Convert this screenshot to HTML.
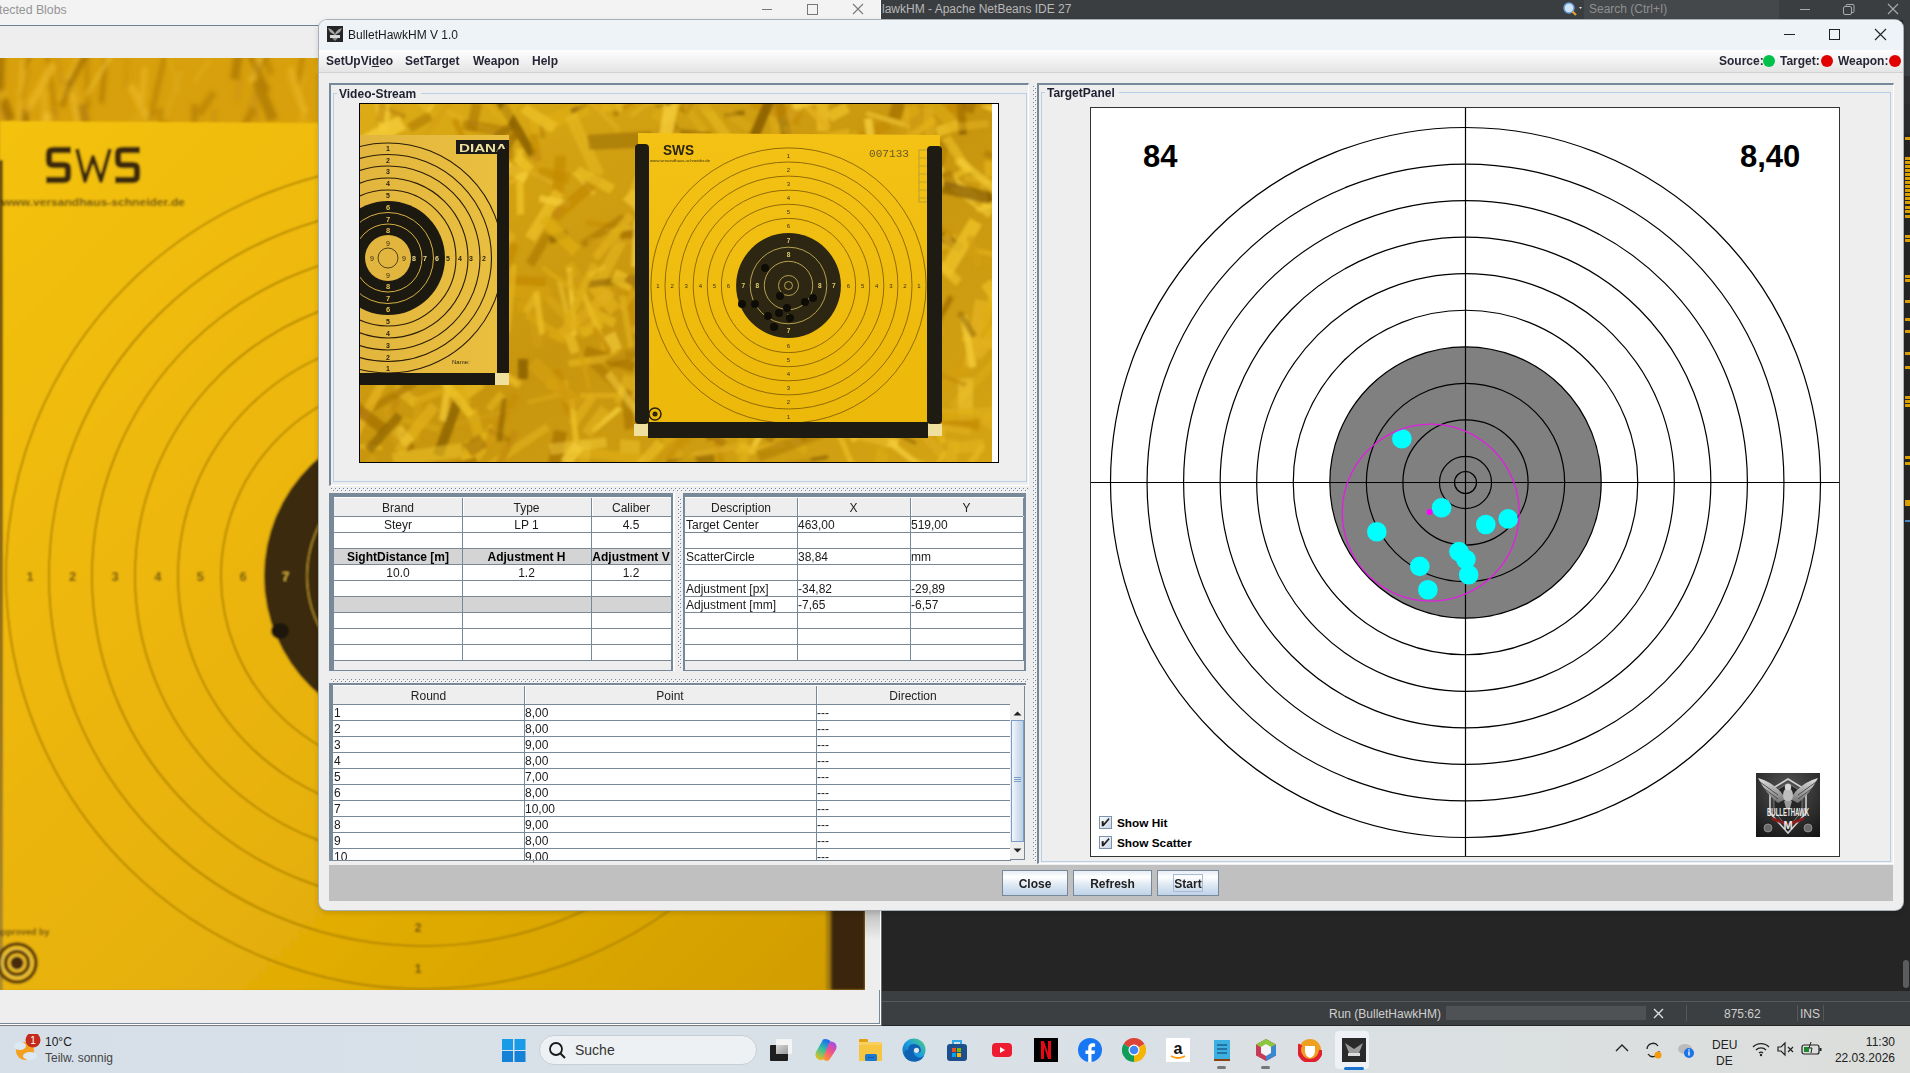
<!DOCTYPE html>
<html><head><meta charset="utf-8"><title>BulletHawkHM</title>
<style>
html,body{margin:0;padding:0;}
body{width:1910px;height:1073px;overflow:hidden;position:relative;background:#232323;font-family:"Liberation Sans", sans-serif;}
.a{position:absolute;}
.t{position:absolute;white-space:nowrap;line-height:1;}
svg{position:absolute;display:block;}
</style></head><body>
<div class="a" style="left:0;top:0;width:881px;height:1025px;background:#eeeeee;overflow:hidden;"><div class="a" style="left:0;top:0;width:881px;height:25px;background:#f3f3f3;"></div><div class="t" style="left:-1px;top:4px;font-size:12.3px;color:#959595;">tected Blobs</div><div class="a" style="left:762px;top:9px;width:10px;height:1px;background:#777;"></div><div class="a" style="left:807px;top:4px;width:9px;height:9px;border:1px solid #777;"></div><svg style="left:852px;top:3px" width="12" height="12"><path d="M1 1L11 11M11 1L1 11" stroke="#777" stroke-width="1.1"/></svg><div class="a" style="left:0;top:25px;width:881px;height:1px;background:#6d7f95;"></div><div class="a" style="left:879px;top:25px;width:1px;height:999px;background:#778899;"></div><div class="a" style="left:880px;top:0;width:1px;height:1025px;background:#ffffff;"></div><div class="a" style="left:0;top:1023px;width:880px;height:1px;background:#778899;"></div><div class="a" style="left:0;top:1024px;width:881px;height:1px;background:#ffffff;"></div><div class="a" style="left:865px;top:58px;width:15px;height:932px;background:linear-gradient(#e6e6e6,#eeeeee);"></div><div class="a" style="left:865px;top:910px;width:15px;height:30px;background:linear-gradient(#bdbdbd,#eeeeee);"></div><svg style="left:0;top:58px" width="865" height="932" viewBox="0 0 865 932"><defs><linearGradient id="lp" x1="0" y1="0" x2="1" y2="1"><stop offset="0" stop-color="#f4c20e"/><stop offset="0.3" stop-color="#eeb80a"/><stop offset="0.55" stop-color="#e8b208"/><stop offset="0.85" stop-color="#d8a404"/><stop offset="1" stop-color="#d09c04"/></linearGradient><linearGradient id="lbar" x1="0" y1="0" x2="0" y2="1"><stop offset="0" stop-color="#2a1608"/><stop offset="0.35" stop-color="#5a4018"/><stop offset="1" stop-color="#a89040"/></linearGradient><linearGradient id="lw" x1="0" y1="0" x2="0" y2="1"><stop offset="0" stop-color="#d8a00c"/><stop offset="1" stop-color="#d49c0a"/></linearGradient></defs><rect x="0" y="0" width="865" height="932" fill="url(#lw)"/><filter id="lbl" x="-5%" y="-5%" width="110%" height="110%"><feGaussianBlur stdDeviation="2.2"/></filter><filter id="lbl2" x="-5%" y="-5%" width="110%" height="110%"><feGaussianBlur stdDeviation="0.9"/></filter><g filter="url(#lbl)"><polygon points="556,26 524,76 531,81 563,30" fill="#dca818" opacity="0.41"/><polygon points="413,46 387,92 390,94 416,48" fill="#b07a08" opacity="0.79"/><polygon points="327,-18 317,13 322,15 332,-16" fill="#f0c030" opacity="0.81"/><polygon points="658,-23 681,33 688,30 665,-25" fill="#f0c030" opacity="0.46"/><polygon points="874,-35 842,14 846,16 878,-33" fill="#f0c030" opacity="0.53"/><polygon points="837,12 854,63 863,60 846,9" fill="#a06c06" opacity="0.49"/><polygon points="848,12 849,33 859,33 857,12" fill="#c89010" opacity="0.43"/><polygon points="253,31 248,50 253,52 258,32" fill="#c89010" opacity="0.56"/><polygon points="255,35 255,64 259,64 259,35" fill="#c89010" opacity="0.84"/><polygon points="-19,29 13,83 21,78 -12,25" fill="#c89010" opacity="0.57"/><polygon points="741,0 732,55 741,57 751,2" fill="#e8b420" opacity="0.74"/><polygon points="815,52 821,89 827,88 822,51" fill="#b07a08" opacity="0.45"/><polygon points="637,33 669,87 677,83 646,28" fill="#e8b420" opacity="0.49"/><polygon points="437,8 444,35 451,33 445,7" fill="#e8b420" opacity="0.54"/><polygon points="259,-4 268,18 275,15 266,-7" fill="#b07a08" opacity="0.47"/><polygon points="20,51 24,97 28,97 24,50" fill="#dca818" opacity="0.55"/><polygon points="211,32 196,54 202,59 217,36" fill="#b07a08" opacity="0.55"/><polygon points="153,53 173,97 181,94 162,49" fill="#b07a08" opacity="0.45"/><polygon points="364,-27 377,34 383,32 370,-28" fill="#dca818" opacity="0.78"/><polygon points="867,6 854,49 860,51 873,8" fill="#c89010" opacity="0.61"/><polygon points="796,-31 792,30 796,30 800,-31" fill="#b07a08" opacity="0.79"/><polygon points="142,9 138,54 144,55 148,9" fill="#e8b420" opacity="0.75"/><polygon points="688,23 670,73 675,75 693,25" fill="#a06c06" opacity="0.70"/><polygon points="741,-22 721,44 731,47 750,-19" fill="#c89010" opacity="0.69"/><polygon points="495,-31 508,15 516,13 503,-33" fill="#b07a08" opacity="0.53"/><polygon points="426,30 435,66 440,65 431,28" fill="#b07a08" opacity="0.56"/><polygon points="754,39 723,84 731,89 762,44" fill="#dca818" opacity="0.46"/><polygon points="873,-11 856,23 861,25 878,-9" fill="#e8b420" opacity="0.72"/><polygon points="641,-25 633,33 641,34 648,-24" fill="#b07a08" opacity="0.54"/><polygon points="489,49 469,76 473,79 492,51" fill="#dca818" opacity="0.60"/><polygon points="572,-18 562,35 565,36 575,-18" fill="#b07a08" opacity="0.84"/><polygon points="134,53 120,75 126,78 140,57" fill="#dca818" opacity="0.42"/><polygon points="402,-3 395,47 400,48 407,-2" fill="#c89010" opacity="0.40"/><polygon points="334,-3 351,34 359,30 342,-7" fill="#c89010" opacity="0.83"/><polygon points="474,-2 472,33 482,33 483,-2" fill="#c89010" opacity="0.83"/><polygon points="724,-5 712,55 717,56 730,-4" fill="#f0c030" opacity="0.47"/><polygon points="319,18 331,45 334,44 322,16" fill="#a06c06" opacity="0.40"/><polygon points="64,16 84,63 91,60 71,13" fill="#dca818" opacity="0.57"/><polygon points="378,-7 359,22 363,25 383,-3" fill="#f0c030" opacity="0.67"/><polygon points="211,51 214,96 219,96 216,51" fill="#c89010" opacity="0.62"/><polygon points="238,17 234,43 240,44 244,18" fill="#c89010" opacity="0.42"/><polygon points="103,1 99,45 104,45 108,2" fill="#b07a08" opacity="0.75"/><polygon points="208,-0 192,23 196,26 212,3" fill="#dca818" opacity="0.85"/><polygon points="463,35 432,91 435,92 466,36" fill="#f0c030" opacity="0.54"/><polygon points="461,1 459,36 465,36 467,1" fill="#c89010" opacity="0.71"/><polygon points="712,-9 711,11 718,12 720,-8" fill="#e8b420" opacity="0.80"/><polygon points="469,-38 472,21 479,20 476,-38" fill="#a06c06" opacity="0.83"/><polygon points="563,32 563,94 571,94 571,32" fill="#a06c06" opacity="0.49"/><polygon points="250,48 240,69 247,73 257,52" fill="#b07a08" opacity="0.66"/><polygon points="557,15 570,48 577,45 564,12" fill="#b07a08" opacity="0.84"/><polygon points="452,8 475,49 482,45 459,4" fill="#c89010" opacity="0.77"/><polygon points="695,35 689,55 698,58 704,38" fill="#b07a08" opacity="0.72"/><polygon points="23,45 16,76 26,78 32,47" fill="#a06c06" opacity="0.80"/><polygon points="870,31 885,70 889,69 874,30" fill="#f0c030" opacity="0.43"/><polygon points="179,11 162,62 167,63 184,13" fill="#dca818" opacity="0.66"/><polygon points="649,51 650,78 655,78 654,51" fill="#dca818" opacity="0.62"/><polygon points="285,17 310,77 315,75 289,15" fill="#dca818" opacity="0.68"/><polygon points="440,43 431,90 436,91 444,44" fill="#dca818" opacity="0.51"/><polygon points="743,-19 716,44 724,48 751,-16" fill="#b07a08" opacity="0.73"/><polygon points="127,29 151,76 158,72 134,25" fill="#e8b420" opacity="0.79"/><polygon points="433,9 434,48 444,48 443,9" fill="#e8b420" opacity="0.76"/><polygon points="-2,43 7,64 15,60 7,39" fill="#a06c06" opacity="0.76"/><polygon points="657,-36 656,30 660,30 661,-36" fill="#a06c06" opacity="0.68"/><polygon points="301,-9 295,28 300,29 306,-8" fill="#b07a08" opacity="0.57"/><polygon points="633,2 626,37 636,38 642,4" fill="#c89010" opacity="0.63"/><polygon points="512,11 517,67 521,67 515,10" fill="#e8b420" opacity="0.48"/><polygon points="162,-2 147,64 152,65 167,-0" fill="#b07a08" opacity="0.61"/><polygon points="783,22 784,63 787,63 787,22" fill="#f0c030" opacity="0.69"/><polygon points="41,32 41,96 48,96 48,32" fill="#e8b420" opacity="0.52"/><polygon points="125,-1 124,30 128,30 128,-1" fill="#c89010" opacity="0.54"/><polygon points="41,-28 22,10 26,12 44,-27" fill="#a06c06" opacity="0.55"/><polygon points="370,-18 405,42 412,38 377,-22" fill="#dca818" opacity="0.50"/><polygon points="44,-10 53,58 58,58 49,-10" fill="#b07a08" opacity="0.56"/><polygon points="46,53 31,94 35,96 50,55" fill="#f0c030" opacity="0.82"/><polygon points="545,-2 581,57 584,55 548,-3" fill="#a06c06" opacity="0.58"/><polygon points="20,2 16,71 22,71 25,2" fill="#e8b420" opacity="0.72"/><polygon points="191,46 191,71 198,71 198,46" fill="#a06c06" opacity="0.42"/><polygon points="336,-21 338,12 343,11 341,-21" fill="#e8b420" opacity="0.79"/><polygon points="843,-21 832,33 837,34 847,-20" fill="#f0c030" opacity="0.44"/><polygon points="273,-23 249,18 255,21 279,-19" fill="#a06c06" opacity="0.50"/><polygon points="-5,14 -10,58 -4,58 1,14" fill="#a06c06" opacity="0.46"/><polygon points="-0,28 -26,76 -17,81 9,33" fill="#dca818" opacity="0.45"/><polygon points="271,-30 248,23 253,25 276,-28" fill="#f0c030" opacity="0.64"/><polygon points="420,22 387,72 393,76 427,26" fill="#c89010" opacity="0.43"/><polygon points="608,-20 615,9 620,8 613,-21" fill="#e8b420" opacity="0.43"/><polygon points="658,-1 690,48 694,46 663,-4" fill="#f0c030" opacity="0.66"/><polygon points="391,35 362,79 369,84 398,39" fill="#a06c06" opacity="0.59"/><polygon points="69,35 78,83 83,82 75,34" fill="#f0c030" opacity="0.52"/><polygon points="592,2 585,24 591,26 599,5" fill="#e8b420" opacity="0.45"/><polygon points="847,41 858,82 867,79 857,39" fill="#e8b420" opacity="0.50"/><polygon points="356,7 375,38 381,34 362,3" fill="#f0c030" opacity="0.73"/><polygon points="67,21 59,48 65,50 73,22" fill="#b07a08" opacity="0.76"/><polygon points="83,-16 85,50 91,50 89,-16" fill="#b07a08" opacity="0.42"/><polygon points="583,-18 583,25 586,26 586,-18" fill="#f0c030" opacity="0.77"/><polygon points="339,-33 374,26 380,22 345,-37" fill="#b07a08" opacity="0.72"/><polygon points="304,15 292,42 297,44 309,17" fill="#dca818" opacity="0.56"/><polygon points="650,-6 660,30 670,27 659,-9" fill="#e8b420" opacity="0.68"/><polygon points="342,-29 341,33 344,33 345,-29" fill="#f0c030" opacity="0.58"/><polygon points="671,-18 646,43 653,46 678,-15" fill="#b07a08" opacity="0.71"/><polygon points="756,13 763,73 766,73 759,13" fill="#dca818" opacity="0.67"/><polygon points="541,48 536,68 543,70 548,50" fill="#dca818" opacity="0.57"/><polygon points="419,31 396,64 403,69 426,36" fill="#a06c06" opacity="0.65"/><polygon points="45,-15 23,19 25,20 48,-14" fill="#dca818" opacity="0.49"/><polygon points="239,-37 230,21 239,22 248,-36" fill="#a06c06" opacity="0.59"/><polygon points="846,-40 865,24 868,23 849,-41" fill="#e8b420" opacity="0.70"/><polygon points="854,40 831,89 838,93 861,43" fill="#dca818" opacity="0.65"/><polygon points="411,-14 415,11 423,10 419,-16" fill="#b07a08" opacity="0.58"/><polygon points="-19,8 -25,36 -16,38 -10,10" fill="#a06c06" opacity="0.68"/><polygon points="328,-28 323,26 331,27 336,-27" fill="#c89010" opacity="0.51"/><polygon points="80,-13 58,42 61,43 83,-12" fill="#f0c030" opacity="0.43"/><polygon points="353,-21 347,32 354,32 360,-20" fill="#a06c06" opacity="0.80"/><polygon points="636,5 633,46 642,46 645,5" fill="#c89010" opacity="0.59"/><polygon points="53,48 56,84 60,84 57,47" fill="#c89010" opacity="0.65"/><polygon points="524,-10 520,20 528,21 532,-8" fill="#a06c06" opacity="0.55"/><polygon points="48,57 47,84 50,84 51,58" fill="#f0c030" opacity="0.78"/><polygon points="564,52 555,83 564,85 572,55" fill="#b07a08" opacity="0.78"/><polygon points="-23,35 -19,60 -14,59 -18,34" fill="#e8b420" opacity="0.66"/><polygon points="365,-8 385,46 394,43 374,-12" fill="#dca818" opacity="0.83"/><polygon points="539,61 550,84 553,83 542,60" fill="#f0c030" opacity="0.55"/><polygon points="146,32 122,98 127,99 150,34" fill="#dca818" opacity="0.61"/><polygon points="-30,43 -3,105 0,104 -27,42" fill="#b07a08" opacity="0.83"/><polygon points="841,-32 824,23 829,25 846,-31" fill="#e8b420" opacity="0.76"/><polygon points="880,39 885,69 888,68 884,39" fill="#b07a08" opacity="0.69"/><polygon points="668,-15 670,11 679,10 677,-16" fill="#e8b420" opacity="0.63"/><polygon points="28,10 20,41 24,42 31,11" fill="#c89010" opacity="0.84"/><polygon points="483,12 471,38 479,42 491,16" fill="#f0c030" opacity="0.44"/><polygon points="303,48 296,67 301,69 308,50" fill="#e8b420" opacity="0.41"/><polygon points="470,45 499,102 508,97 479,41" fill="#f0c030" opacity="0.84"/><polygon points="373,19 379,43 388,41 382,17" fill="#a06c06" opacity="0.61"/><polygon points="-3,-26 -5,33 4,33 6,-26" fill="#a06c06" opacity="0.69"/><polygon points="556,-18 549,2 555,4 562,-16" fill="#b07a08" opacity="0.81"/><polygon points="335,49 307,99 311,101 338,51" fill="#f0c030" opacity="0.59"/><polygon points="856,59 858,90 863,90 861,59" fill="#b07a08" opacity="0.56"/><polygon points="-10,16 -29,71 -26,72 -6,17" fill="#a06c06" opacity="0.57"/><polygon points="781,55 796,80 804,76 788,50" fill="#c89010" opacity="0.67"/><polygon points="119,-19 85,37 87,39 122,-17" fill="#f0c030" opacity="0.77"/><polygon points="51,-24 60,28 64,27 55,-25" fill="#c89010" opacity="0.63"/><polygon points="854,40 864,62 871,59 861,37" fill="#c89010" opacity="0.54"/><polygon points="806,16 786,53 795,58 814,20" fill="#f0c030" opacity="0.52"/><polygon points="470,39 469,65 477,66 478,39" fill="#e8b420" opacity="0.41"/><polygon points="161,-16 177,37 182,36 166,-18" fill="#dca818" opacity="0.51"/><polygon points="606,36 601,94 607,95 612,36" fill="#e8b420" opacity="0.69"/><polygon points="819,-2 806,42 815,45 828,1" fill="#b07a08" opacity="0.84"/><polygon points="235,-24 266,35 271,32 241,-27" fill="#a06c06" opacity="0.50"/><polygon points="547,-24 529,18 534,20 552,-21" fill="#b07a08" opacity="0.46"/><polygon points="287,10 302,56 308,54 293,8" fill="#e8b420" opacity="0.73"/><polygon points="78,47 85,85 93,84 87,45" fill="#b07a08" opacity="0.75"/><polygon points="653,-18 642,42 648,43 659,-17" fill="#a06c06" opacity="0.76"/><polygon points="628,11 595,66 603,70 635,15" fill="#dca818" opacity="0.46"/><polygon points="13,33 38,74 41,72 16,32" fill="#dca818" opacity="0.62"/><polygon points="755,-27 775,18 783,14 762,-31" fill="#dca818" opacity="0.60"/><polygon points="506,8 491,61 499,63 514,10" fill="#dca818" opacity="0.44"/><polygon points="50,4 24,50 31,54 57,8" fill="#e8b420" opacity="0.83"/><polygon points="588,-6 596,34 602,32 594,-7" fill="#c89010" opacity="0.40"/><polygon points="664,1 665,66 669,66 668,1" fill="#f0c030" opacity="0.82"/><polygon points="252,24 268,64 278,60 261,20" fill="#a06c06" opacity="0.59"/><polygon points="534,33 545,60 551,57 540,31" fill="#a06c06" opacity="0.63"/><polygon points="822,9 824,30 830,29 829,9" fill="#dca818" opacity="0.64"/><polygon points="789,11 792,64 801,63 797,10" fill="#c89010" opacity="0.53"/><polygon points="84,-6 66,28 71,30 89,-3" fill="#a06c06" opacity="0.72"/></g><g filter="url(#lbl2)"><polygon points="0,63 865,68 865,932 0,932" fill="url(#lp)"/><ellipse cx="424" cy="518" rx="418" ry="413" fill="none" stroke="#a47a00" stroke-width="1.5"/><ellipse cx="424" cy="518" rx="375" ry="370" fill="none" stroke="#a47a00" stroke-width="1.5"/><ellipse cx="424" cy="518" rx="332" ry="327" fill="none" stroke="#a47a00" stroke-width="1.5"/><ellipse cx="424" cy="518" rx="289" ry="284" fill="none" stroke="#a47a00" stroke-width="1.5"/><ellipse cx="424" cy="518" rx="246" ry="241" fill="none" stroke="#a47a00" stroke-width="1.5"/><ellipse cx="424" cy="518" rx="203" ry="198" fill="none" stroke="#a47a00" stroke-width="1.5"/><ellipse cx="424" cy="518" rx="160" ry="157" fill="#3b2c0c"/><ellipse cx="424" cy="518" rx="117" ry="115" fill="none" stroke="#c9a030" stroke-width="1.2"/><text x="30.0" y="523" font-family="Liberation Sans" font-size="13" font-weight="bold" fill="#6e5408" text-anchor="middle">1</text><text x="72.6" y="523" font-family="Liberation Sans" font-size="13" font-weight="bold" fill="#6e5408" text-anchor="middle">2</text><text x="115.2" y="523" font-family="Liberation Sans" font-size="13" font-weight="bold" fill="#6e5408" text-anchor="middle">3</text><text x="157.8" y="523" font-family="Liberation Sans" font-size="13" font-weight="bold" fill="#6e5408" text-anchor="middle">4</text><text x="200.4" y="523" font-family="Liberation Sans" font-size="13" font-weight="bold" fill="#6e5408" text-anchor="middle">5</text><text x="243.0" y="523" font-family="Liberation Sans" font-size="13" font-weight="bold" fill="#6e5408" text-anchor="middle">6</text><text x="285.6" y="523" font-family="Liberation Sans" font-size="13" font-weight="bold" fill="#d8b040" text-anchor="middle">7</text><text x="418" y="874" font-family="Liberation Sans" font-size="13" font-weight="bold" fill="#6e5408" text-anchor="middle">2</text><text x="418" y="915" font-family="Liberation Sans" font-size="13" font-weight="bold" fill="#6e5408" text-anchor="middle">1</text><ellipse cx="280" cy="573" rx="9" ry="8" fill="#1e1608"/><path d="M71 150 L53 150 Q49 150 49 154 L49 161 Q49 165 53 165 L64 165 Q68 165 68 169 L68 176 Q68 180 64 180 L46 180" transform="translate(0,-58)" fill="none" stroke="#3e2a0c" stroke-width="6.5" stroke-linejoin="round"/><path d="M71 150 L53 150 Q49 150 49 154 L49 161 Q49 165 53 165 L64 165 Q68 165 68 169 L68 176 Q68 180 64 180 L46 180" transform="translate(69,-58)" fill="none" stroke="#3e2a0c" stroke-width="6.5" stroke-linejoin="round"/><path d="M77 149 L85 181 L93 157 L101 181 L110 149" transform="translate(0,-58)" fill="none" stroke="#3e2a0c" stroke-width="4" stroke-linejoin="round"/><text x="2" y="148" font-family="Liberation Sans" font-size="11" font-weight="bold" fill="#6a5214" textLength="183" lengthAdjust="spacingAndGlyphs">www.versandhaus-schneider.de</text><rect x="0" y="102" width="2.5" height="932" fill="url(#lbar)"/><text x="-4" y="877" font-family="Liberation Sans" font-size="9" font-weight="bold" fill="#6a5214">approved by</text><circle cx="17" cy="905" r="19" fill="none" stroke="#5a3a08" stroke-width="3.5"/><circle cx="17" cy="905" r="14.5" fill="none" stroke="#e8c040" stroke-width="2.5"/><circle cx="17" cy="905" r="11.5" fill="none" stroke="#5a3a08" stroke-width="3.5"/><circle cx="17" cy="905" r="8" fill="#e8c040"/><circle cx="17" cy="905" r="6.5" fill="#4a2a08"/><rect x="830" y="802" width="35" height="130" fill="#3a2808"/><rect x="826" y="802" width="6" height="130" fill="#8a6a10" opacity="0.6"/></g></svg></div><div class="a" style="left:0;top:1025px;width:882px;height:1px;background:#7a7a7a;"></div><div class="a" style="left:881px;top:0;width:1029px;height:1026px;background:#252526;overflow:hidden;"><div class="a" style="left:0;top:0;width:1029px;height:20px;background:#3b3e41;"></div><div class="t" style="left:1px;top:3px;font-size:12px;color:#b8b8b8;">lawkHM - Apache NetBeans IDE 27</div><svg style="left:680px;top:1px" width="24" height="18"><circle cx="8" cy="7" r="5" fill="#cfe3f7" stroke="#6aa0d8" stroke-width="1.4"/><path d="M11.5 10.5L15 14" stroke="#e0a030" stroke-width="2.2"/><path d="M18 6l3 0l-1.5 2z" fill="#ddd"/></svg><div class="a" style="left:703px;top:0;width:195px;height:19px;background:#45484b;"></div><div class="t" style="left:708px;top:3px;font-size:12px;color:#8f8f8f;">Search (Ctrl+I)</div><div class="a" style="left:919px;top:9px;width:10px;height:1px;background:#aaa;"></div><svg style="left:961px;top:3px" width="14" height="14"><rect x="1.5" y="3.5" width="8" height="8" rx="1.5" fill="none" stroke="#aaa"/><path d="M4 3.5V2.5a1 1 0 0 1 1-1h6a1 1 0 0 1 1 1v6a1 1 0 0 1-1 1h-1.5" fill="none" stroke="#aaa"/></svg><svg style="left:1006px;top:3px" width="12" height="12"><path d="M1 1L11 11M11 1L1 11" stroke="#aaa" stroke-width="1.1"/></svg><div class="a" style="left:1022px;top:20px;width:7px;height:56px;background:#3c3f41;"></div><div class="a" style="left:1022px;top:76px;width:7px;height:28px;background:#2f3133;"></div><div class="a" style="left:1022px;top:104px;width:7px;height:30px;background:#2b2d2f;"></div><div class="a" style="left:1024px;top:137px;width:6px;height:3px;background:#e0a000;"></div><div class="a" style="left:1024px;top:157px;width:6px;height:3px;background:#e0a000;"></div><div class="a" style="left:1024px;top:161px;width:6px;height:3px;background:#e0a000;"></div><div class="a" style="left:1024px;top:165px;width:6px;height:3px;background:#e0a000;"></div><div class="a" style="left:1024px;top:169px;width:6px;height:3px;background:#e0a000;"></div><div class="a" style="left:1024px;top:173px;width:6px;height:3px;background:#e0a000;"></div><div class="a" style="left:1024px;top:177px;width:6px;height:3px;background:#e0a000;"></div><div class="a" style="left:1024px;top:181px;width:6px;height:3px;background:#e0a000;"></div><div class="a" style="left:1024px;top:185px;width:6px;height:3px;background:#e0a000;"></div><div class="a" style="left:1024px;top:189px;width:6px;height:3px;background:#e0a000;"></div><div class="a" style="left:1024px;top:193px;width:6px;height:3px;background:#e0a000;"></div><div class="a" style="left:1024px;top:197px;width:6px;height:3px;background:#e0a000;"></div><div class="a" style="left:1024px;top:201px;width:6px;height:3px;background:#e0a000;"></div><div class="a" style="left:1024px;top:206px;width:6px;height:3px;background:#e0a000;"></div><div class="a" style="left:1024px;top:210px;width:6px;height:3px;background:#e0a000;"></div><div class="a" style="left:1024px;top:215px;width:6px;height:3px;background:#e0a000;"></div><div class="a" style="left:1024px;top:235px;width:6px;height:3px;background:#e0a000;"></div><div class="a" style="left:1024px;top:239px;width:6px;height:3px;background:#e0a000;"></div><div class="a" style="left:1024px;top:275px;width:6px;height:3px;background:#e0a000;"></div><div class="a" style="left:1024px;top:279px;width:6px;height:3px;background:#e0a000;"></div><div class="a" style="left:1024px;top:300px;width:6px;height:3px;background:#e0a000;"></div><div class="a" style="left:1024px;top:318px;width:6px;height:3px;background:#e0a000;"></div><div class="a" style="left:1024px;top:330px;width:6px;height:3px;background:#e0a000;"></div><div class="a" style="left:1024px;top:352px;width:6px;height:3px;background:#e0a000;"></div><div class="a" style="left:1024px;top:366px;width:6px;height:3px;background:#e0a000;"></div><div class="a" style="left:1024px;top:396px;width:6px;height:3px;background:#e0a000;"></div><div class="a" style="left:1024px;top:400px;width:6px;height:3px;background:#e0a000;"></div><div class="a" style="left:1024px;top:404px;width:6px;height:3px;background:#e0a000;"></div><div class="a" style="left:1024px;top:456px;width:6px;height:3px;background:#e0a000;"></div><div class="a" style="left:1024px;top:462px;width:6px;height:3px;background:#e0a000;"></div><div class="a" style="left:1024px;top:500px;width:6px;height:3px;background:#e0a000;"></div><div class="a" style="left:1024px;top:503px;width:6px;height:3px;background:#e0a000;"></div><div class="a" style="left:1024px;top:520px;width:6px;height:2px;background:#4a88c8;"></div><div class="a" style="left:1022px;top:960px;width:6px;height:28px;background:#5a5d60;border-radius:3px;"></div><div class="a" style="left:0;top:991px;width:1029px;height:34px;background:#3c3f41;"></div><div class="a" style="left:0;top:1001px;width:1029px;height:1px;background:#56595c;"></div><div class="t" style="left:448px;top:1008px;font-size:12px;color:#cfcfcf;">Run (BulletHawkHM)</div><div class="a" style="left:565px;top:1006px;width:200px;height:14px;background:#4e5254;"></div><svg style="left:772px;top:1008px" width="11" height="11"><path d="M1 1L10 10M10 1L1 10" stroke="#ddd" stroke-width="1.4"/></svg><div class="a" style="left:805px;top:1005px;width:1px;height:16px;background:#55585b;"></div><div class="t" style="left:843px;top:1008px;font-size:12px;color:#cfcfcf;">875:62</div><div class="a" style="left:916px;top:1005px;width:1px;height:16px;background:#55585b;"></div><div class="t" style="left:919px;top:1008px;font-size:12px;color:#cfcfcf;">INS</div><div class="a" style="left:942px;top:1005px;width:1px;height:16px;background:#55585b;"></div><div class="a" style="left:0;top:20px;width:1px;height:1006px;background:#6a6a6a;"></div></div><div class="a" style="left:319px;top:20px;width:1584px;height:890px;background:#eeeeee;border-radius:8px;overflow:hidden;box-shadow:0 0 0 1px #a9b0b6, 0 2px 6px rgba(0,0,0,0.18);"><div class="a" style="left:0px;top:0px;width:1584px;height:30px;background:#edf3f6;"></div><svg style="left:8px;top:6px" width="16" height="16"><rect width="16" height="16" fill="#262626"/><path d="M1 2Q5 3 7 6L8 8L9 6Q11 3 15 2L13 6Q10 8 8 9Q6 8 3 6Z" fill="#a8a8a8"/><rect x="3" y="9" width="10" height="3" fill="#d8d8d8"/><path d="M5 12L8 15L11 12Z" fill="#888"/></svg><div class="t" style="left:29px;top:9px;font-size:12px;color:#1a1a1a;">BulletHawkHM V 1.0</div><div class="a" style="left:1465px;top:14px;width:11px;height:1px;background:#222;"></div><div class="a" style="left:1510px;top:9px;width:10px;height:10px;border:1px solid #222;box-sizing:border-box;width:11px;height:11px;"></div><svg style="left:1555px;top:8px" width="13" height="13"><path d="M1 1L12 12M12 1L1 12" stroke="#222" stroke-width="1.1"/></svg><div class="a" style="left:0px;top:30px;width:1584px;height:22px;background:linear-gradient(#ffffff,#f4f4f4 40%,#e4e4e4);"></div><div class="a" style="left:0px;top:52px;width:1584px;height:1px;background:#d2d2d2;"></div><div class="t" style="left:7px;top:35px;font-size:12px;font-weight:bold;color:#262636;">SetUpVi<span style="text-decoration:underline">d</span>eo</div><div class="t" style="left:86px;top:35px;font-size:12px;font-weight:bold;color:#262636;">SetTarget</div><div class="t" style="left:154px;top:35px;font-size:12px;font-weight:bold;color:#262636;">Weapon</div><div class="t" style="left:213px;top:35px;font-size:12px;font-weight:bold;color:#262636;">Help</div><div class="t" style="left:1400px;top:35px;font-size:12px;font-weight:bold;color:#262636;">Source:</div><div class="a" style="left:1444px;top:35px;width:12px;height:12px;border-radius:50%;background:#00c24a;"></div><div class="t" style="left:1461px;top:35px;font-size:12px;font-weight:bold;color:#262636;">Target:</div><div class="a" style="left:1502px;top:35px;width:12px;height:12px;border-radius:50%;background:#e00000;"></div><div class="t" style="left:1519px;top:35px;font-size:12px;font-weight:bold;color:#262636;">Weapon:</div><div class="a" style="left:1570px;top:35px;width:12px;height:12px;border-radius:50%;background:#e00000;"></div><div class="a" style="left:10px;top:63px;width:700px;height:403px;border-top:2px solid #778899;border-left:2px solid #778899;border-right:1px solid #fff;border-bottom:1px solid #fff;box-sizing:border-box;"></div><div class="a" style="left:14px;top:73px;width:694px;height:389px;border:1px solid #b8cfe5;box-sizing:border-box;"></div><div class="a" style="left:18px;top:66px;width:84px;height:12px;background:#eeeeee;"></div><div class="t" style="left:20px;top:68px;font-size:12px;font-weight:bold;color:#1e2030;">Video-Stream</div><div class="a" style="left:40px;top:83px;width:640px;height:360px;background:#000;"></div><svg style="left:41px;top:84px" width="638" height="358" viewBox="0 0 638 358"><defs><linearGradient id="vw" x1="0" y1="0" x2="1" y2="1"><stop offset="0" stop-color="#dcac16"/><stop offset="0.5" stop-color="#c8960e"/><stop offset="1" stop-color="#d4a414"/></linearGradient><linearGradient id="dp" x1="0" x2="1"><stop offset="0" stop-color="#e2b63e"/><stop offset="1" stop-color="#eac040"/></linearGradient><linearGradient id="sp" x1="0" y1="0" x2="0" y2="1"><stop offset="0" stop-color="#f3c214"/><stop offset="1" stop-color="#ecb80a"/></linearGradient></defs><filter id="vbl" x="-5%" y="-5%" width="110%" height="110%"><feGaussianBlur stdDeviation="1.4"/></filter><rect width="638" height="358" fill="url(#vw)"/><g filter="url(#vbl)"><polygon points="279,171 286,236 295,235 288,170" fill="#f4cc38" opacity="0.81"/><polygon points="298,212 302,237 307,236 303,211" fill="#e4b41a" opacity="0.72"/><polygon points="257,133 231,182 241,187 267,138" fill="#ecc026" opacity="0.48"/><polygon points="104,68 105,85 114,84 113,67" fill="#8a6004" opacity="0.56"/><polygon points="180,-29 171,-11 178,-8 188,-25" fill="#ecc026" opacity="0.77"/><polygon points="177,74 208,80 210,69 180,63" fill="#c48a08" opacity="0.62"/><polygon points="620,318 632,327 640,317 627,308" fill="#e2b01c" opacity="0.64"/><polygon points="348,38 375,83 380,80 353,35" fill="#e2b01c" opacity="0.79"/><polygon points="49,82 69,84 71,74 51,72" fill="#8a6004" opacity="0.53"/><polygon points="314,345 329,401 336,399 321,344" fill="#deae16" opacity="0.45"/><polygon points="590,366 542,367 542,370 590,369" fill="#ecc026" opacity="0.47"/><polygon points="76,146 72,161 82,165 87,150" fill="#ecc026" opacity="0.49"/><polygon points="362,56 380,101 388,97 371,52" fill="#d4a012" opacity="0.82"/><polygon points="56,115 83,156 88,152 61,111" fill="#deae16" opacity="0.52"/><polygon points="393,177 413,226 420,224 400,175" fill="#e4b41a" opacity="0.50"/><polygon points="12,350 -5,372 0,376 18,354" fill="#d4a012" opacity="0.58"/><polygon points="89,264 102,277 109,269 96,256" fill="#ecc026" opacity="0.58"/><polygon points="594,58 605,69 610,64 599,53" fill="#f4cc38" opacity="0.58"/><polygon points="329,367 348,375 351,368 332,360" fill="#8a6004" opacity="0.71"/><polygon points="81,-14 66,-11 69,1 85,-2" fill="#e4b41a" opacity="0.72"/><polygon points="15,2 44,15 46,11 17,-2" fill="#a87404" opacity="0.78"/><polygon points="608,252 566,285 573,295 615,262" fill="#d4a012" opacity="0.86"/><polygon points="595,129 542,154 546,163 599,138" fill="#e2b01c" opacity="0.62"/><polygon points="-22,8 -3,15 -1,9 -20,2" fill="#a87404" opacity="0.62"/><polygon points="494,200 460,218 462,223 497,204" fill="#e4b41a" opacity="0.59"/><polygon points="6,-17 69,6 73,-5 10,-29" fill="#d4a012" opacity="0.57"/><polygon points="-35,87 7,118 10,113 -31,81" fill="#d4a012" opacity="0.67"/><polygon points="144,125 132,151 143,157 156,131" fill="#deae16" opacity="0.85"/><polygon points="224,209 253,224 257,215 228,201" fill="#e4b41a" opacity="0.77"/><polygon points="619,79 623,103 629,102 625,78" fill="#e2b01c" opacity="0.62"/><polygon points="354,230 307,257 311,265 358,238" fill="#e4b41a" opacity="0.58"/><polygon points="380,239 394,266 403,261 390,234" fill="#f4cc38" opacity="0.63"/><polygon points="116,272 92,290 101,300 125,283" fill="#ecc026" opacity="0.65"/><polygon points="436,231 377,241 378,250 437,241" fill="#d4a012" opacity="0.57"/><polygon points="442,281 486,287 487,280 443,274" fill="#8a6004" opacity="0.76"/><polygon points="318,200 335,254 348,249 331,195" fill="#ecc026" opacity="0.63"/><polygon points="565,128 599,149 605,141 571,120" fill="#8a6004" opacity="0.71"/><polygon points="567,264 576,331 585,330 576,263" fill="#ecc026" opacity="0.55"/><polygon points="588,335 581,404 592,405 599,337" fill="#e4b41a" opacity="0.61"/><polygon points="50,137 17,168 22,174 55,142" fill="#ecc026" opacity="0.64"/><polygon points="28,181 -23,194 -21,203 31,191" fill="#8a6004" opacity="0.83"/><polygon points="468,351 426,358 427,362 468,355" fill="#8a6004" opacity="0.70"/><polygon points="538,191 538,215 550,216 549,192" fill="#e2b01c" opacity="0.88"/><polygon points="554,220 583,233 586,225 557,212" fill="#d4a012" opacity="0.54"/><polygon points="319,185 367,189 368,176 320,172" fill="#e2b01c" opacity="0.69"/><polygon points="639,29 656,39 663,28 645,18" fill="#e2b01c" opacity="0.57"/><polygon points="314,14 281,36 288,47 320,25" fill="#a87404" opacity="0.50"/><polygon points="268,-24 252,1 261,8 277,-18" fill="#f4cc38" opacity="0.55"/><polygon points="450,91 437,123 442,125 455,93" fill="#ecc026" opacity="0.83"/><polygon points="427,254 377,274 379,278 428,258" fill="#8a6004" opacity="0.73"/><polygon points="326,312 360,340 364,335 330,307" fill="#f4cc38" opacity="0.55"/><polygon points="462,277 496,332 503,328 468,273" fill="#deae16" opacity="0.80"/><polygon points="82,8 140,33 142,29 84,4" fill="#e2b01c" opacity="0.82"/><polygon points="257,286 266,306 274,303 266,283" fill="#deae16" opacity="0.71"/><polygon points="229,290 209,318 216,324 236,295" fill="#deae16" opacity="0.81"/><polygon points="311,-39 291,14 303,19 322,-35" fill="#deae16" opacity="0.53"/><polygon points="152,304 84,321 85,325 152,308" fill="#d4a012" opacity="0.48"/><polygon points="34,120 52,154 57,151 39,117" fill="#e4b41a" opacity="0.83"/><polygon points="92,135 109,188 114,186 97,133" fill="#8a6004" opacity="0.81"/><polygon points="225,-4 168,18 174,31 231,10" fill="#deae16" opacity="0.68"/><polygon points="659,291 630,298 634,310 662,303" fill="#e2b01c" opacity="0.51"/><polygon points="197,178 205,212 210,211 202,177" fill="#f4cc38" opacity="0.48"/><polygon points="204,162 210,176 220,171 213,157" fill="#deae16" opacity="0.57"/><polygon points="625,87 634,112 639,111 630,86" fill="#8a6004" opacity="0.90"/><polygon points="444,255 387,259 387,263 444,259" fill="#deae16" opacity="0.57"/><polygon points="245,-11 255,13 259,11 249,-13" fill="#a87404" opacity="0.70"/><polygon points="347,359 301,359 301,370 348,371" fill="#ecc026" opacity="0.70"/><polygon points="450,353 414,359 416,368 452,362" fill="#d4a012" opacity="0.69"/><polygon points="368,137 395,169 401,165 374,132" fill="#8a6004" opacity="0.58"/><polygon points="431,189 413,214 417,217 435,193" fill="#deae16" opacity="0.71"/><polygon points="383,142 435,150 436,144 384,135" fill="#a87404" opacity="0.48"/><polygon points="614,146 573,150 574,156 615,152" fill="#d4a012" opacity="0.51"/><polygon points="604,77 657,85 658,78 605,71" fill="#e4b41a" opacity="0.61"/><polygon points="77,115 83,137 93,134 87,112" fill="#e2b01c" opacity="0.61"/><polygon points="475,297 489,315 493,312 479,294" fill="#8a6004" opacity="0.85"/><polygon points="496,219 519,245 527,238 504,212" fill="#deae16" opacity="0.73"/><polygon points="505,48 476,48 477,63 506,63" fill="#e4b41a" opacity="0.73"/><polygon points="-22,85 -6,87 -5,81 -21,80" fill="#ecc026" opacity="0.86"/><polygon points="84,39 88,108 95,108 90,39" fill="#d4a012" opacity="0.79"/><polygon points="555,-1 536,11 543,20 561,8" fill="#deae16" opacity="0.65"/><polygon points="474,135 494,146 500,135 479,124" fill="#c48a08" opacity="0.70"/><polygon points="476,330 491,365 496,363 481,328" fill="#ecc026" opacity="0.69"/><polygon points="263,177 273,236 282,235 273,176" fill="#c48a08" opacity="0.55"/><polygon points="435,-3 415,22 423,28 443,3" fill="#f4cc38" opacity="0.55"/><polygon points="405,85 439,140 446,135 412,80" fill="#c48a08" opacity="0.65"/><polygon points="513,88 522,119 536,115 527,83" fill="#deae16" opacity="0.49"/><polygon points="543,-37 528,13 541,16 555,-34" fill="#a87404" opacity="0.81"/><polygon points="324,306 362,331 369,320 331,295" fill="#c48a08" opacity="0.82"/><polygon points="121,-5 135,14 139,11 125,-8" fill="#e2b01c" opacity="0.48"/><polygon points="340,297 358,303 362,291 343,284" fill="#ecc026" opacity="0.46"/><polygon points="410,-9 425,49 436,46 421,-12" fill="#8a6004" opacity="0.60"/><polygon points="274,95 304,146 308,144 279,93" fill="#ecc026" opacity="0.77"/><polygon points="610,114 579,166 591,173 622,121" fill="#ecc026" opacity="0.85"/><polygon points="638,214 612,249 621,256 647,221" fill="#e2b01c" opacity="0.86"/><polygon points="157,22 130,64 136,67 163,25" fill="#8a6004" opacity="0.58"/><polygon points="621,3 650,15 654,4 625,-8" fill="#f4cc38" opacity="0.86"/><polygon points="505,-28 472,-3 476,2 509,-23" fill="#a87404" opacity="0.55"/><polygon points="120,252 156,283 160,279 123,248" fill="#f4cc38" opacity="0.86"/><polygon points="615,195 604,262 616,263 627,197" fill="#e2b01c" opacity="0.86"/><polygon points="207,164 212,232 217,231 212,164" fill="#f4cc38" opacity="0.81"/><polygon points="222,178 250,211 260,202 233,169" fill="#deae16" opacity="0.85"/><polygon points="556,329 583,358 590,351 562,323" fill="#e2b01c" opacity="0.52"/><polygon points="195,52 190,114 202,115 206,52" fill="#c48a08" opacity="0.68"/><polygon points="2,205 23,219 30,210 9,196" fill="#f4cc38" opacity="0.49"/><polygon points="158,255 158,276 168,275 168,255" fill="#8a6004" opacity="0.84"/><polygon points="204,287 167,296 168,301 205,292" fill="#deae16" opacity="0.47"/><polygon points="293,169 226,177 227,184 294,176" fill="#8a6004" opacity="0.59"/><polygon points="304,249 285,278 289,281 308,251" fill="#d4a012" opacity="0.79"/><polygon points="527,15 492,32 496,42 532,25" fill="#c48a08" opacity="0.70"/><polygon points="317,-39 261,2 264,7 321,-34" fill="#c48a08" opacity="0.73"/><polygon points="636,251 589,300 595,305 642,257" fill="#deae16" opacity="0.54"/><polygon points="477,77 465,143 475,145 487,79" fill="#e2b01c" opacity="0.49"/><polygon points="89,-5 58,37 62,40 93,-2" fill="#d4a012" opacity="0.72"/><polygon points="29,69 51,77 54,71 31,63" fill="#e2b01c" opacity="0.87"/><polygon points="77,50 63,68 71,74 85,55" fill="#e4b41a" opacity="0.78"/><polygon points="370,91 412,132 421,122 379,81" fill="#c48a08" opacity="0.60"/><polygon points="204,231 211,251 220,247 213,227" fill="#ecc026" opacity="0.73"/><polygon points="89,253 79,316 86,318 96,254" fill="#f4cc38" opacity="0.71"/><polygon points="130,320 88,375 99,383 141,328" fill="#e4b41a" opacity="0.73"/><polygon points="112,-2 106,26 116,28 122,0" fill="#a87404" opacity="0.57"/><polygon points="555,145 596,182 602,175 562,138" fill="#ecc026" opacity="0.70"/><polygon points="186,319 128,358 133,365 190,326" fill="#e4b41a" opacity="0.58"/><polygon points="607,62 567,85 570,90 610,67" fill="#ecc026" opacity="0.65"/><polygon points="287,289 220,289 220,294 287,294" fill="#e2b01c" opacity="0.73"/><polygon points="409,273 415,296 419,295 413,272" fill="#ecc026" opacity="0.71"/><polygon points="97,172 91,200 98,202 105,173" fill="#e4b41a" opacity="0.77"/><polygon points="493,137 533,152 535,144 495,129" fill="#e2b01c" opacity="0.79"/><polygon points="335,359 280,386 284,393 338,366" fill="#ecc026" opacity="0.86"/><polygon points="354,180 317,192 319,198 356,185" fill="#e2b01c" opacity="0.78"/><polygon points="387,263 379,294 383,295 391,265" fill="#d4a012" opacity="0.56"/><polygon points="550,367 589,380 594,368 555,354" fill="#e2b01c" opacity="0.87"/><polygon points="600,363 550,385 553,392 603,370" fill="#f4cc38" opacity="0.55"/><polygon points="454,201 516,219 519,210 457,192" fill="#8a6004" opacity="0.71"/><polygon points="260,99 315,103 315,97 260,93" fill="#d4a012" opacity="0.82"/><polygon points="226,121 272,128 273,123 226,116" fill="#c48a08" opacity="0.60"/><polygon points="103,276 49,296 51,303 105,282" fill="#e4b41a" opacity="0.54"/><polygon points="527,116 561,139 569,126 535,103" fill="#deae16" opacity="0.69"/><polygon points="153,326 121,387 128,390 159,329" fill="#c48a08" opacity="0.84"/><polygon points="489,24 437,36 438,43 490,31" fill="#deae16" opacity="0.84"/><polygon points="68,241 50,264 56,269 74,246" fill="#c48a08" opacity="0.62"/><polygon points="409,319 444,351 449,345 414,313" fill="#deae16" opacity="0.57"/><polygon points="403,-17 416,51 425,49 412,-19" fill="#e4b41a" opacity="0.45"/><polygon points="379,175 370,212 376,213 385,176" fill="#deae16" opacity="0.56"/><polygon points="179,188 156,198 159,209 183,198" fill="#d4a012" opacity="0.86"/><polygon points="345,-23 408,-10 408,-15 346,-28" fill="#a87404" opacity="0.59"/><polygon points="318,-20 291,-5 297,5 325,-10" fill="#8a6004" opacity="0.53"/><polygon points="488,33 523,66 529,59 494,26" fill="#deae16" opacity="0.57"/><polygon points="330,304 363,340 368,335 335,299" fill="#e4b41a" opacity="0.71"/><polygon points="560,55 583,56 584,48 560,47" fill="#d4a012" opacity="0.78"/><polygon points="549,-9 567,2 573,-6 555,-18" fill="#deae16" opacity="0.73"/><polygon points="36,130 -9,158 -3,168 43,141" fill="#d4a012" opacity="0.49"/><polygon points="521,46 546,61 552,50 527,36" fill="#d4a012" opacity="0.48"/><polygon points="272,122 245,124 245,128 272,126" fill="#f4cc38" opacity="0.52"/><polygon points="278,275 292,286 299,278 286,267" fill="#e2b01c" opacity="0.70"/><polygon points="314,320 276,377 286,384 324,327" fill="#deae16" opacity="0.58"/><polygon points="41,318 78,328 80,322 43,313" fill="#deae16" opacity="0.47"/><polygon points="244,233 252,250 262,244 255,227" fill="#f4cc38" opacity="0.66"/><polygon points="258,302 231,325 234,329 262,306" fill="#f4cc38" opacity="0.81"/><polygon points="525,152 515,187 525,191 536,155" fill="#d4a012" opacity="0.90"/><polygon points="434,312 443,337 447,335 438,310" fill="#a87404" opacity="0.88"/><polygon points="397,158 395,214 405,215 407,159" fill="#deae16" opacity="0.57"/><polygon points="205,14 233,74 244,69 216,8" fill="#ecc026" opacity="0.46"/><polygon points="206,126 188,133 191,140 209,133" fill="#8a6004" opacity="0.75"/><polygon points="165,214 201,236 205,230 169,208" fill="#deae16" opacity="0.59"/><polygon points="272,186 258,203 263,207 277,190" fill="#e2b01c" opacity="0.52"/><polygon points="107,67 122,119 131,116 115,64" fill="#deae16" opacity="0.50"/><polygon points="239,213 219,224 224,234 244,223" fill="#e4b41a" opacity="0.81"/><polygon points="666,89 616,102 617,108 667,95" fill="#ecc026" opacity="0.88"/><polygon points="544,70 592,84 594,76 546,63" fill="#e4b41a" opacity="0.67"/><polygon points="586,81 628,114 636,105 594,72" fill="#f4cc38" opacity="0.61"/><polygon points="488,173 435,190 438,201 491,185" fill="#c48a08" opacity="0.77"/><polygon points="349,252 355,267 361,265 355,250" fill="#e2b01c" opacity="0.57"/><polygon points="241,301 222,327 231,333 249,308" fill="#e4b41a" opacity="0.61"/><polygon points="589,191 575,216 580,219 594,194" fill="#a87404" opacity="0.88"/><polygon points="248,183 197,227 204,235 255,191" fill="#e2b01c" opacity="0.73"/><polygon points="13,-12 20,28 33,26 26,-14" fill="#f4cc38" opacity="0.76"/><polygon points="144,181 185,182 186,173 145,172" fill="#c48a08" opacity="0.76"/><polygon points="129,-40 144,3 149,1 135,-42" fill="#8a6004" opacity="0.49"/><polygon points="558,313 516,346 519,350 561,318" fill="#e4b41a" opacity="0.59"/><polygon points="491,248 439,255 440,266 492,258" fill="#d4a012" opacity="0.81"/><polygon points="184,128 166,158 174,163 192,132" fill="#a87404" opacity="0.60"/><polygon points="89,185 111,188 112,184 90,181" fill="#c48a08" opacity="0.50"/><polygon points="265,283 301,304 307,292 272,270" fill="#e4b41a" opacity="0.61"/><polygon points="227,259 265,296 272,290 234,252" fill="#a87404" opacity="0.53"/><polygon points="537,59 579,77 584,64 542,46" fill="#f4cc38" opacity="0.73"/><polygon points="534,291 544,311 552,307 543,287" fill="#f4cc38" opacity="0.89"/><polygon points="328,246 271,260 272,266 329,252" fill="#c48a08" opacity="0.73"/><polygon points="214,352 283,361 284,351 215,342" fill="#e4b41a" opacity="0.54"/><polygon points="207,168 223,225 237,221 220,164" fill="#d4a012" opacity="0.53"/><polygon points="37,125 8,181 14,184 43,128" fill="#e2b01c" opacity="0.79"/><polygon points="643,108 637,161 647,162 653,109" fill="#f4cc38" opacity="0.83"/><polygon points="348,306 360,369 366,367 354,305" fill="#c48a08" opacity="0.70"/><polygon points="63,222 86,242 92,235 69,216" fill="#c48a08" opacity="0.70"/><polygon points="96,-43 67,6 70,8 99,-41" fill="#f4cc38" opacity="0.90"/><polygon points="106,307 118,347 128,344 117,304" fill="#e4b41a" opacity="0.55"/><polygon points="384,304 409,319 412,314 388,299" fill="#d4a012" opacity="0.71"/><polygon points="648,-11 586,-1 588,9 649,-2" fill="#c48a08" opacity="0.61"/><polygon points="469,106 512,108 513,101 469,99" fill="#e4b41a" opacity="0.80"/><polygon points="156,45 157,111 164,110 163,45" fill="#ecc026" opacity="0.87"/><polygon points="323,304 288,317 291,325 326,311" fill="#f4cc38" opacity="0.55"/><polygon points="262,110 220,138 224,144 267,116" fill="#a87404" opacity="0.59"/><polygon points="7,224 40,259 44,256 11,221" fill="#e4b41a" opacity="0.78"/><polygon points="338,249 361,257 363,252 339,245" fill="#e2b01c" opacity="0.46"/><polygon points="260,-7 240,-5 242,8 262,6" fill="#e4b41a" opacity="0.85"/><polygon points="208,276 187,275 187,285 208,285" fill="#deae16" opacity="0.67"/><polygon points="479,331 537,345 539,336 481,322" fill="#f4cc38" opacity="0.80"/><polygon points="344,-43 319,6 328,11 353,-38" fill="#a87404" opacity="0.85"/><polygon points="563,209 553,250 559,252 568,210" fill="#d4a012" opacity="0.65"/><polygon points="284,295 302,334 309,331 291,292" fill="#e4b41a" opacity="0.69"/><polygon points="277,95 294,98 295,91 278,88" fill="#a87404" opacity="0.90"/><polygon points="508,100 452,101 453,109 508,108" fill="#f4cc38" opacity="0.79"/><polygon points="599,15 575,23 578,33 602,25" fill="#ecc026" opacity="0.81"/><polygon points="333,367 317,375 321,384 337,376" fill="#a87404" opacity="0.65"/><polygon points="331,318 349,337 356,331 338,312" fill="#8a6004" opacity="0.65"/><polygon points="491,320 491,338 496,338 496,319" fill="#ecc026" opacity="0.81"/><polygon points="72,128 93,131 94,123 73,120" fill="#c48a08" opacity="0.50"/><polygon points="108,104 88,162 98,166 118,107" fill="#deae16" opacity="0.69"/><polygon points="194,326 182,393 195,396 207,328" fill="#a87404" opacity="0.76"/><polygon points="531,343 571,375 575,370 534,338" fill="#f4cc38" opacity="0.76"/><polygon points="306,24 285,29 287,38 308,34" fill="#deae16" opacity="0.45"/><polygon points="49,46 0,69 4,78 54,55" fill="#ecc026" opacity="0.73"/><polygon points="261,288 265,326 275,324 271,287" fill="#a87404" opacity="0.68"/><polygon points="251,178 270,188 276,174 256,165" fill="#ecc026" opacity="0.75"/><polygon points="297,335 273,362 279,368 304,342" fill="#ecc026" opacity="0.62"/><polygon points="185,197 221,234 227,228 191,191" fill="#deae16" opacity="0.46"/><polygon points="220,188 243,246 248,244 225,186" fill="#ecc026" opacity="0.70"/><polygon points="40,329 48,348 55,344 47,326" fill="#a87404" opacity="0.90"/><polygon points="509,317 555,341 557,338 511,314" fill="#8a6004" opacity="0.59"/><polygon points="468,212 400,217 401,230 469,225" fill="#deae16" opacity="0.74"/><polygon points="450,368 452,387 460,386 458,367" fill="#deae16" opacity="0.68"/><polygon points="375,148 372,208 377,208 380,148" fill="#e4b41a" opacity="0.53"/><polygon points="396,212 435,253 444,244 405,203" fill="#ecc026" opacity="0.64"/><polygon points="98,113 68,133 74,142 103,123" fill="#e2b01c" opacity="0.69"/><polygon points="321,3 356,50 363,45 327,-1" fill="#deae16" opacity="0.51"/><polygon points="50,171 26,192 30,196 54,176" fill="#e4b41a" opacity="0.90"/><polygon points="367,49 385,59 391,46 373,37" fill="#8a6004" opacity="0.52"/><polygon points="638,169 624,204 637,209 652,174" fill="#e2b01c" opacity="0.82"/><polygon points="139,287 126,303 131,308 145,292" fill="#e4b41a" opacity="0.63"/><polygon points="327,323 295,354 302,363 335,332" fill="#c48a08" opacity="0.49"/><polygon points="136,-1 170,55 177,50 144,-6" fill="#8a6004" opacity="0.88"/><polygon points="351,150 372,211 379,209 358,148" fill="#c48a08" opacity="0.55"/><polygon points="42,277 27,310 32,313 48,280" fill="#c48a08" opacity="0.83"/><polygon points="12,170 27,212 32,211 17,168" fill="#a87404" opacity="0.46"/><polygon points="220,336 217,380 228,381 231,337" fill="#ecc026" opacity="0.45"/><polygon points="384,345 374,378 381,380 391,347" fill="#e4b41a" opacity="0.59"/><polygon points="289,183 345,192 346,188 290,179" fill="#c48a08" opacity="0.81"/><polygon points="601,237 636,246 638,238 604,230" fill="#e2b01c" opacity="0.89"/><polygon points="554,97 527,114 533,124 561,107" fill="#e4b41a" opacity="0.90"/><polygon points="302,137 320,145 323,138 305,129" fill="#deae16" opacity="0.71"/><polygon points="-12,254 -34,285 -21,293 1,262" fill="#ecc026" opacity="0.53"/><polygon points="41,241 24,256 32,265 49,249" fill="#d4a012" opacity="0.59"/><polygon points="485,-2 466,9 472,18 490,8" fill="#ecc026" opacity="0.77"/><polygon points="223,252 272,268 275,258 227,242" fill="#a87404" opacity="0.69"/><polygon points="544,-2 550,61 554,60 548,-2" fill="#e2b01c" opacity="0.54"/><polygon points="470,162 438,185 444,192 475,169" fill="#8a6004" opacity="0.78"/><polygon points="84,203 97,226 101,223 89,200" fill="#8a6004" opacity="0.76"/><polygon points="300,199 270,225 274,230 304,203" fill="#e2b01c" opacity="0.60"/><polygon points="459,59 440,81 447,87 465,64" fill="#ecc026" opacity="0.81"/><polygon points="165,71 139,79 141,83 166,75" fill="#e2b01c" opacity="0.86"/><polygon points="297,162 278,182 281,185 300,166" fill="#f4cc38" opacity="0.47"/><polygon points="440,188 462,227 467,224 445,185" fill="#a87404" opacity="0.81"/><polygon points="33,288 54,304 60,296 38,280" fill="#ecc026" opacity="0.52"/><polygon points="92,17 121,80 126,78 97,14" fill="#c48a08" opacity="0.72"/><polygon points="536,363 545,382 550,379 542,360" fill="#c48a08" opacity="0.58"/><polygon points="350,90 369,93 370,79 351,76" fill="#f4cc38" opacity="0.84"/><polygon points="95,291 73,350 83,353 104,295" fill="#8a6004" opacity="0.79"/><polygon points="439,196 467,238 474,233 446,191" fill="#8a6004" opacity="0.56"/><polygon points="313,118 259,128 261,137 315,127" fill="#a87404" opacity="0.85"/><polygon points="52,188 7,200 10,210 55,198" fill="#e4b41a" opacity="0.50"/><polygon points="339,3 380,59 388,53 347,-3" fill="#ecc026" opacity="0.51"/><polygon points="292,27 227,31 229,46 293,43" fill="#8a6004" opacity="0.48"/><polygon points="324,36 344,75 351,71 331,32" fill="#ecc026" opacity="0.64"/><polygon points="306,-10 299,31 312,33 320,-8" fill="#f4cc38" opacity="0.85"/><polygon points="138,65 164,79 169,70 143,55" fill="#f4cc38" opacity="0.84"/><polygon points="615,-34 603,7 613,10 625,-31" fill="#a87404" opacity="0.87"/><polygon points="5,186 72,193 73,187 5,180" fill="#e4b41a" opacity="0.64"/><polygon points="100,38 57,60 62,71 105,49" fill="#ecc026" opacity="0.45"/><polygon points="54,275 -5,310 -2,317 57,282" fill="#a87404" opacity="0.63"/><polygon points="581,70 588,86 598,82 591,66" fill="#a87404" opacity="0.65"/><polygon points="126,328 149,339 151,334 129,323" fill="#a87404" opacity="0.53"/><polygon points="441,199 431,245 439,247 448,200" fill="#c48a08" opacity="0.55"/><polygon points="194,85 165,132 175,138 204,91" fill="#ecc026" opacity="0.76"/><polygon points="320,147 317,164 323,165 326,148" fill="#ecc026" opacity="0.86"/><polygon points="657,123 640,137 646,146 663,131" fill="#deae16" opacity="0.62"/><polygon points="166,189 173,244 183,243 176,188" fill="#d4a012" opacity="0.46"/><polygon points="615,149 638,154 639,149 616,144" fill="#deae16" opacity="0.87"/><polygon points="214,337 201,356 210,364 223,345" fill="#f4cc38" opacity="0.77"/><polygon points="153,289 121,343 128,347 160,293" fill="#c48a08" opacity="0.52"/><polygon points="583,347 554,394 558,396 587,349" fill="#ecc026" opacity="0.57"/><polygon points="348,291 317,314 320,319 351,295" fill="#deae16" opacity="0.46"/><polygon points="620,339 584,394 590,398 626,342" fill="#ecc026" opacity="0.58"/><polygon points="518,346 506,384 517,388 529,350" fill="#deae16" opacity="0.52"/><polygon points="299,230 289,268 297,270 307,232" fill="#e4b41a" opacity="0.53"/><polygon points="469,64 482,74 489,65 477,55" fill="#ecc026" opacity="0.66"/><polygon points="88,-13 119,-9 120,-15 88,-19" fill="#a87404" opacity="0.76"/><polygon points="137,275 159,285 163,277 141,266" fill="#e2b01c" opacity="0.69"/><polygon points="263,95 311,140 321,129 273,85" fill="#f4cc38" opacity="0.66"/><polygon points="388,337 332,348 333,355 389,343" fill="#e2b01c" opacity="0.52"/><polygon points="625,83 614,99 620,104 631,87" fill="#d4a012" opacity="0.79"/><polygon points="532,214 507,260 513,264 539,218" fill="#d4a012" opacity="0.48"/><polygon points="187,232 204,240 206,236 189,229" fill="#e4b41a" opacity="0.49"/><polygon points="545,53 496,88 500,94 549,59" fill="#8a6004" opacity="0.50"/><polygon points="227,-3 210,5 212,10 229,1" fill="#8a6004" opacity="0.68"/><polygon points="600,212 609,264 616,263 607,211" fill="#f4cc38" opacity="0.76"/><polygon points="543,244 495,278 498,283 547,249" fill="#c48a08" opacity="0.77"/><polygon points="22,270 -10,329 -2,334 30,274" fill="#e2b01c" opacity="0.87"/><polygon points="390,3 438,22 443,8 395,-11" fill="#c48a08" opacity="0.56"/><polygon points="399,274 380,296 389,303 407,280" fill="#e4b41a" opacity="0.65"/><polygon points="228,140 284,140 285,134 228,134" fill="#d4a012" opacity="0.55"/><polygon points="455,-36 457,27 469,27 467,-36" fill="#ecc026" opacity="0.76"/><polygon points="314,102 339,119 345,110 320,93" fill="#ecc026" opacity="0.60"/><polygon points="623,335 592,339 594,350 625,347" fill="#e4b41a" opacity="0.60"/><polygon points="148,192 189,196 191,184 149,180" fill="#d4a012" opacity="0.79"/><polygon points="319,66 347,126 354,123 326,63" fill="#a87404" opacity="0.47"/><polygon points="231,158 203,219 210,222 238,161" fill="#deae16" opacity="0.81"/><polygon points="596,-7 599,31 607,30 604,-8" fill="#8a6004" opacity="0.86"/><polygon points="150,160 144,230 150,230 157,161" fill="#e4b41a" opacity="0.73"/><polygon points="106,336 92,392 103,396 117,339" fill="#e4b41a" opacity="0.77"/><polygon points="282,142 282,163 297,162 297,141" fill="#e4b41a" opacity="0.70"/><polygon points="1,149 -44,169 -38,181 6,161" fill="#deae16" opacity="0.63"/><polygon points="395,253 444,259 445,249 397,244" fill="#e4b41a" opacity="0.71"/><polygon points="268,108 232,151 238,157 274,114" fill="#deae16" opacity="0.83"/><polygon points="326,211 294,213 294,217 326,215" fill="#deae16" opacity="0.83"/><polygon points="493,196 443,219 444,223 495,200" fill="#ecc026" opacity="0.77"/><polygon points="278,107 283,145 290,144 285,106" fill="#e2b01c" opacity="0.84"/><polygon points="408,-12 386,39 395,43 417,-8" fill="#8a6004" opacity="0.89"/><polygon points="528,119 492,156 497,161 533,124" fill="#d4a012" opacity="0.65"/><polygon points="420,41 414,98 426,99 432,42" fill="#e2b01c" opacity="0.46"/><polygon points="264,270 254,298 260,300 270,272" fill="#deae16" opacity="0.79"/><polygon points="264,177 279,187 284,180 269,170" fill="#a87404" opacity="0.79"/><polygon points="373,53 361,105 372,107 384,55" fill="#f4cc38" opacity="0.79"/><polygon points="355,307 397,309 398,298 355,296" fill="#d4a012" opacity="0.60"/><polygon points="598,275 598,317 613,317 613,274" fill="#f4cc38" opacity="0.49"/><polygon points="6,142 15,187 19,186 10,141" fill="#e2b01c" opacity="0.79"/><polygon points="41,74 12,118 21,125 50,81" fill="#c48a08" opacity="0.52"/><polygon points="361,165 375,207 383,204 369,162" fill="#deae16" opacity="0.54"/><polygon points="-28,343 22,346 22,342 -28,338" fill="#e4b41a" opacity="0.76"/><polygon points="-29,291 20,330 27,321 -22,282" fill="#a87404" opacity="0.82"/><polygon points="566,321 619,326 620,312 567,307" fill="#c48a08" opacity="0.72"/><polygon points="652,55 641,80 647,83 657,58" fill="#a87404" opacity="0.80"/><polygon points="579,36 572,60 583,64 590,39" fill="#a87404" opacity="0.55"/><polygon points="570,316 581,341 587,338 576,313" fill="#e4b41a" opacity="0.83"/><polygon points="511,278 459,288 460,292 512,282" fill="#a87404" opacity="0.79"/><polygon points="325,178 296,199 302,206 331,185" fill="#f4cc38" opacity="0.70"/><polygon points="-17,42 35,50 36,39 -15,32" fill="#e4b41a" opacity="0.61"/><polygon points="212,69 233,92 236,89 215,67" fill="#f4cc38" opacity="0.57"/><polygon points="54,296 51,337 59,337 62,296" fill="#d4a012" opacity="0.76"/><polygon points="315,126 315,163 323,163 324,126" fill="#8a6004" opacity="0.90"/><polygon points="512,306 530,331 537,326 519,302" fill="#e4b41a" opacity="0.73"/><polygon points="198,36 143,66 149,76 204,46" fill="#d4a012" opacity="0.49"/><polygon points="325,46 305,89 315,94 335,52" fill="#ecc026" opacity="0.56"/><polygon points="621,182 646,218 656,211 631,175" fill="#ecc026" opacity="0.69"/><polygon points="70,298 34,345 42,351 79,305" fill="#e2b01c" opacity="0.72"/><polygon points="323,2 376,12 378,2 325,-8" fill="#d4a012" opacity="0.55"/><polygon points="282,179 276,212 284,214 290,181" fill="#deae16" opacity="0.77"/><polygon points="597,210 612,234 617,231 602,207" fill="#8a6004" opacity="0.50"/><polygon points="427,58 390,105 397,111 434,64" fill="#e4b41a" opacity="0.78"/><polygon points="478,272 443,308 453,317 487,281" fill="#a87404" opacity="0.81"/><polygon points="575,271 605,283 607,279 577,267" fill="#c48a08" opacity="0.62"/><polygon points="513,69 558,100 564,92 519,61" fill="#deae16" opacity="0.72"/><polygon points="153,56 167,70 174,63 160,49" fill="#ecc026" opacity="0.89"/><polygon points="442,213 420,242 426,247 448,218" fill="#d4a012" opacity="0.71"/><polygon points="54,73 63,93 72,88 63,69" fill="#e2b01c" opacity="0.52"/><polygon points="377,332 377,357 386,357 387,332" fill="#deae16" opacity="0.65"/><polygon points="330,-8 286,-2 287,2 331,-3" fill="#deae16" opacity="0.83"/><polygon points="417,254 380,297 384,300 420,257" fill="#f4cc38" opacity="0.57"/><polygon points="401,323 388,348 393,351 406,325" fill="#f4cc38" opacity="0.83"/><polygon points="379,345 395,350 397,344 381,339" fill="#ecc026" opacity="0.65"/><polygon points="35,178 19,188 25,198 41,188" fill="#e2b01c" opacity="0.71"/><polygon points="303,137 344,141 345,132 304,128" fill="#a87404" opacity="0.87"/><polygon points="245,272 283,321 288,316 251,267" fill="#f4cc38" opacity="0.62"/><polygon points="485,118 434,134 435,138 486,122" fill="#c48a08" opacity="0.56"/><polygon points="663,-8 638,42 649,47 673,-3" fill="#a87404" opacity="0.79"/><polygon points="80,355 29,378 33,385 83,362" fill="#c48a08" opacity="0.90"/><polygon points="517,230 578,259 581,252 520,223" fill="#f4cc38" opacity="0.80"/><polygon points="402,144 439,172 447,162 409,134" fill="#c48a08" opacity="0.65"/><polygon points="550,362 564,388 572,384 559,358" fill="#c48a08" opacity="0.54"/><polygon points="350,117 365,117 365,113 350,113" fill="#c48a08" opacity="0.66"/><polygon points="341,-20 304,-9 307,1 344,-10" fill="#d4a012" opacity="0.84"/><polygon points="606,133 615,164 623,162 613,131" fill="#d4a012" opacity="0.69"/><polygon points="424,338 374,345 375,350 425,343" fill="#e4b41a" opacity="0.64"/><polygon points="556,184 543,206 549,210 563,188" fill="#a87404" opacity="0.49"/><polygon points="17,135 -17,185 -8,191 25,141" fill="#a87404" opacity="0.87"/><polygon points="-2,236 37,250 40,240 1,226" fill="#f4cc38" opacity="0.69"/><polygon points="50,195 79,248 83,246 55,192" fill="#a87404" opacity="0.85"/><polygon points="366,182 335,235 345,242 377,188" fill="#c48a08" opacity="0.73"/><polygon points="280,-27 308,3 315,-4 287,-34" fill="#8a6004" opacity="0.57"/><polygon points="327,124 360,136 364,122 331,111" fill="#ecc026" opacity="0.66"/><polygon points="340,291 304,301 306,309 342,299" fill="#d4a012" opacity="0.83"/><polygon points="31,-1 23,53 39,54 46,1" fill="#d4a012" opacity="0.52"/><polygon points="259,192 269,248 275,247 265,191" fill="#deae16" opacity="0.78"/><polygon points="-29,44 -9,55 -7,51 -26,39" fill="#ecc026" opacity="0.70"/><polygon points="97,108 72,111 73,117 98,114" fill="#f4cc38" opacity="0.64"/><polygon points="10,172 44,232 52,228 18,168" fill="#deae16" opacity="0.82"/><polygon points="582,36 606,71 613,66 590,31" fill="#ecc026" opacity="0.64"/><polygon points="74,164 98,170 100,161 75,155" fill="#e4b41a" opacity="0.82"/><polygon points="142,294 136,337 142,338 147,295" fill="#8a6004" opacity="0.59"/><polygon points="77,253 104,303 112,299 84,249" fill="#deae16" opacity="0.66"/><polygon points="68,8 47,20 52,28 73,16" fill="#a87404" opacity="0.54"/><polygon points="13,54 48,88 51,85 17,51" fill="#8a6004" opacity="0.73"/><polygon points="533,215 470,221 471,229 534,223" fill="#a87404" opacity="0.86"/><polygon points="504,15 508,44 516,43 512,14" fill="#f4cc38" opacity="0.83"/><polygon points="232,225 247,249 252,246 236,222" fill="#c48a08" opacity="0.72"/><polygon points="410,224 403,292 413,293 420,225" fill="#d4a012" opacity="0.55"/><polygon points="556,111 590,135 594,130 560,106" fill="#c48a08" opacity="0.59"/><polygon points="320,45 286,76 290,82 325,51" fill="#e2b01c" opacity="0.48"/><polygon points="511,213 514,228 523,227 520,212" fill="#e4b41a" opacity="0.68"/><polygon points="276,70 267,91 278,95 287,75" fill="#ecc026" opacity="0.51"/><polygon points="505,11 549,25 550,20 507,7" fill="#f4cc38" opacity="0.58"/><polygon points="179,98 209,104 211,97 180,91" fill="#f4cc38" opacity="0.80"/><polygon points="423,23 435,66 444,63 433,20" fill="#d4a012" opacity="0.49"/><polygon points="90,-6 66,-3 67,4 91,0" fill="#d4a012" opacity="0.53"/><polygon points="345,226 391,241 393,234 347,219" fill="#d4a012" opacity="0.70"/><polygon points="32,329 45,343 54,335 41,321" fill="#f4cc38" opacity="0.64"/><polygon points="315,50 344,78 351,72 322,44" fill="#f4cc38" opacity="0.72"/><polygon points="385,189 343,194 344,200 386,195" fill="#f4cc38" opacity="0.66"/><polygon points="451,141 401,161 405,170 454,149" fill="#ecc026" opacity="0.61"/><polygon points="260,349 280,350 280,337 260,335" fill="#ecc026" opacity="0.56"/><polygon points="410,239 421,296 429,294 418,237" fill="#a87404" opacity="0.81"/><polygon points="354,350 291,358 292,367 355,360" fill="#8a6004" opacity="0.62"/><polygon points="215,-15 218,4 232,1 229,-18" fill="#e4b41a" opacity="0.49"/><polygon points="102,25 159,36 161,25 104,15" fill="#a87404" opacity="0.53"/><polygon points="26,-29 68,10 76,1 34,-38" fill="#ecc026" opacity="0.54"/><polygon points="244,160 227,170 229,174 246,164" fill="#ecc026" opacity="0.66"/><polygon points="546,72 488,85 490,96 548,83" fill="#ecc026" opacity="0.53"/><polygon points="623,52 679,74 681,68 626,46" fill="#a87404" opacity="0.54"/><polygon points="567,324 610,331 611,324 568,318" fill="#e2b01c" opacity="0.63"/><polygon points="23,304 33,340 41,338 31,301" fill="#d4a012" opacity="0.55"/><polygon points="22,-19 16,18 24,19 29,-18" fill="#c48a08" opacity="0.62"/><polygon points="307,-18 269,10 272,14 310,-14" fill="#e4b41a" opacity="0.58"/><polygon points="179,18 180,34 185,34 184,17" fill="#a87404" opacity="0.45"/><polygon points="332,28 343,65 355,61 344,25" fill="#ecc026" opacity="0.60"/><polygon points="512,160 460,188 467,200 518,172" fill="#c48a08" opacity="0.66"/><polygon points="357,193 321,219 327,228 362,202" fill="#8a6004" opacity="0.72"/><polygon points="582,-17 599,21 610,16 592,-21" fill="#c48a08" opacity="0.51"/><polygon points="470,156 504,200 512,194 479,150" fill="#deae16" opacity="0.85"/><polygon points="265,248 208,256 209,263 266,256" fill="#e4b41a" opacity="0.71"/><polygon points="439,-1 467,27 471,22 443,-5" fill="#e2b01c" opacity="0.87"/><polygon points="70,143 55,169 59,172 74,146" fill="#e2b01c" opacity="0.68"/><polygon points="319,38 351,41 352,28 320,25" fill="#8a6004" opacity="0.55"/><polygon points="150,138 133,185 141,188 159,141" fill="#c48a08" opacity="0.74"/><polygon points="101,339 32,349 34,363 103,353" fill="#ecc026" opacity="0.56"/><polygon points="497,339 524,350 529,335 502,324" fill="#d4a012" opacity="0.51"/><polygon points="246,333 189,340 191,351 247,343" fill="#f4cc38" opacity="0.52"/><polygon points="651,56 624,57 625,73 653,71" fill="#e2b01c" opacity="0.83"/><polygon points="538,194 525,208 535,217 549,203" fill="#e4b41a" opacity="0.63"/><polygon points="324,269 318,286 330,289 336,272" fill="#deae16" opacity="0.75"/><polygon points="424,127 473,139 476,125 427,114" fill="#e2b01c" opacity="0.66"/><polygon points="121,133 114,185 118,186 125,134" fill="#e2b01c" opacity="0.86"/><polygon points="573,12 516,50 520,57 577,19" fill="#e4b41a" opacity="0.75"/><polygon points="444,43 471,60 474,55 447,39" fill="#a87404" opacity="0.75"/><polygon points="29,220 -5,276 5,282 38,226" fill="#d4a012" opacity="0.66"/><polygon points="11,209 -35,231 -31,240 14,218" fill="#e4b41a" opacity="0.74"/><polygon points="181,165 215,190 218,186 184,162" fill="#deae16" opacity="0.66"/><polygon points="581,133 588,147 596,143 588,129" fill="#e2b01c" opacity="0.59"/><polygon points="36,308 5,343 12,349 43,314" fill="#8a6004" opacity="0.64"/><polygon points="493,99 550,138 555,131 498,92" fill="#e4b41a" opacity="0.69"/><polygon points="275,242 245,256 250,266 280,251" fill="#a87404" opacity="0.48"/><polygon points="236,69 191,109 198,117 243,78" fill="#c48a08" opacity="0.78"/><polygon points="39,12 -11,38 -4,52 46,25" fill="#f4cc38" opacity="0.82"/><polygon points="43,137 57,175 64,172 51,134" fill="#e4b41a" opacity="0.89"/><polygon points="221,-9 257,28 261,25 225,-13" fill="#e2b01c" opacity="0.59"/><polygon points="461,322 396,347 400,358 465,333" fill="#a87404" opacity="0.49"/><polygon points="384,6 364,9 365,14 385,11" fill="#8a6004" opacity="0.71"/><polygon points="559,8 512,48 520,57 567,17" fill="#d4a012" opacity="0.46"/><polygon points="475,-15 432,-3 434,6 477,-6" fill="#f4cc38" opacity="0.77"/><polygon points="192,266 206,311 214,308 200,264" fill="#c48a08" opacity="0.76"/><polygon points="160,8 191,29 198,20 167,-0" fill="#ecc026" opacity="0.79"/><polygon points="637,212 653,221 655,217 639,208" fill="#e2b01c" opacity="0.88"/><polygon points="168,69 192,81 194,77 169,65" fill="#e2b01c" opacity="0.64"/><polygon points="336,325 363,343 367,336 340,318" fill="#a87404" opacity="0.72"/><polygon points="549,-14 588,23 596,14 557,-23" fill="#deae16" opacity="0.56"/><polygon points="116,353 53,370 55,377 118,360" fill="#a87404" opacity="0.83"/><polygon points="100,54 153,56 153,42 100,40" fill="#a87404" opacity="0.47"/><polygon points="597,58 644,98 649,92 601,53" fill="#f4cc38" opacity="0.65"/><polygon points="503,66 546,109 552,103 509,60" fill="#e4b41a" opacity="0.70"/><polygon points="215,71 250,90 255,81 219,62" fill="#ecc026" opacity="0.67"/><polygon points="173,190 163,207 168,211 179,194" fill="#ecc026" opacity="0.47"/><polygon points="435,159 381,164 381,169 435,165" fill="#d4a012" opacity="0.87"/><polygon points="109,-15 130,-10 134,-21 112,-27" fill="#d4a012" opacity="0.64"/><polygon points="613,-12 644,-9 644,-16 614,-19" fill="#f4cc38" opacity="0.71"/><polygon points="292,118 274,158 280,160 298,121" fill="#d4a012" opacity="0.85"/><polygon points="129,159 82,188 85,193 132,165" fill="#d4a012" opacity="0.79"/><polygon points="291,359 296,389 310,386 306,356" fill="#deae16" opacity="0.85"/><polygon points="581,89 629,100 631,88 584,77" fill="#8a6004" opacity="0.73"/><polygon points="374,187 339,188 339,199 374,198" fill="#deae16" opacity="0.78"/><polygon points="538,165 577,171 579,160 540,153" fill="#e2b01c" opacity="0.82"/><polygon points="436,255 437,278 446,278 445,256" fill="#ecc026" opacity="0.82"/><polygon points="372,317 412,339 415,333 376,311" fill="#8a6004" opacity="0.47"/><polygon points="145,141 85,153 86,162 146,150" fill="#e4b41a" opacity="0.55"/><polygon points="209,295 213,338 219,337 214,295" fill="#ecc026" opacity="0.81"/><polygon points="569,33 566,48 572,50 576,34" fill="#8a6004" opacity="0.58"/><polygon points="367,79 406,121 415,111 377,70" fill="#8a6004" opacity="0.61"/><polygon points="630,197 618,224 624,226 636,200" fill="#e4b41a" opacity="0.71"/><polygon points="149,-8 136,14 147,21 160,-1" fill="#deae16" opacity="0.61"/><polygon points="642,303 581,305 582,317 643,314" fill="#deae16" opacity="0.71"/><polygon points="179,118 212,152 220,143 187,110" fill="#deae16" opacity="0.75"/><polygon points="152,17 133,30 137,36 156,24" fill="#8a6004" opacity="0.47"/><polygon points="78,277 108,314 115,309 85,272" fill="#ecc026" opacity="0.88"/><polygon points="173,188 179,231 185,230 179,187" fill="#ecc026" opacity="0.76"/><polygon points="444,301 436,314 441,317 449,304" fill="#d4a012" opacity="0.66"/><polygon points="74,160 71,203 77,204 80,160" fill="#c48a08" opacity="0.73"/><polygon points="342,273 354,302 362,298 350,270" fill="#8a6004" opacity="0.53"/><polygon points="648,365 606,367 606,376 648,375" fill="#ecc026" opacity="0.50"/><polygon points="168,264 213,306 222,296 177,253" fill="#d4a012" opacity="0.72"/><polygon points="412,172 403,223 408,224 417,173" fill="#e4b41a" opacity="0.64"/><polygon points="634,159 634,183 641,184 641,159" fill="#f4cc38" opacity="0.53"/><polygon points="485,45 441,45 441,50 485,50" fill="#e4b41a" opacity="0.70"/><polygon points="119,330 103,341 112,353 128,342" fill="#a87404" opacity="0.65"/><polygon points="563,4 566,48 576,47 573,3" fill="#e2b01c" opacity="0.60"/><polygon points="623,203 621,233 631,234 633,204" fill="#deae16" opacity="0.67"/><polygon points="169,31 174,58 182,56 177,29" fill="#c48a08" opacity="0.66"/><polygon points="382,220 438,255 443,246 387,211" fill="#a87404" opacity="0.61"/><polygon points="296,367 253,368 253,378 296,378" fill="#e2b01c" opacity="0.84"/><polygon points="274,116 271,163 280,163 284,117" fill="#f4cc38" opacity="0.78"/><polygon points="34,378 50,379 51,368 36,367" fill="#e4b41a" opacity="0.81"/><polygon points="628,16 588,20 589,28 629,23" fill="#e2b01c" opacity="0.59"/><polygon points="333,350 287,371 292,381 338,360" fill="#deae16" opacity="0.66"/><polygon points="218,249 227,286 232,285 223,248" fill="#d4a012" opacity="0.57"/><polygon points="364,12 387,28 393,21 369,5" fill="#deae16" opacity="0.45"/></g><polygon points="0,31 149,31 149,281 0,281" fill="url(#dp)"/><circle cx="28" cy="154" r="115" fill="none" stroke="#2a1c08" stroke-width="1.1"/><circle cx="28" cy="154" r="103.5" fill="none" stroke="#2a1c08" stroke-width="1.1"/><circle cx="28" cy="154" r="92" fill="none" stroke="#2a1c08" stroke-width="1.1"/><circle cx="28" cy="154" r="80" fill="none" stroke="#2a1c08" stroke-width="1.1"/><circle cx="28" cy="154" r="68" fill="none" stroke="#2a1c08" stroke-width="1.1"/><circle cx="28" cy="154" r="57" fill="#1c1a10"/><circle cx="28" cy="154" r="45.5" fill="none" stroke="#d8b040" stroke-width="1"/><circle cx="28" cy="154" r="34" fill="none" stroke="#d8b040" stroke-width="1"/><circle cx="28" cy="154" r="23" fill="#e2b63e"/><circle cx="28" cy="154" r="10" fill="none" stroke="#2a2410" stroke-width="0.8"/><text x="28" y="46.5" font-family="Liberation Sans" font-size="7" font-weight="bold" fill="#2a2410" text-anchor="middle">1</text><text x="28" y="58.599999999999994" font-family="Liberation Sans" font-size="7" font-weight="bold" fill="#2a2410" text-anchor="middle">2</text><text x="28" y="70.30000000000001" font-family="Liberation Sans" font-size="7" font-weight="bold" fill="#2a2410" text-anchor="middle">3</text><text x="28" y="82.19999999999999" font-family="Liberation Sans" font-size="7" font-weight="bold" fill="#2a2410" text-anchor="middle">4</text><text x="28" y="94" font-family="Liberation Sans" font-size="7" font-weight="bold" fill="#2a2410" text-anchor="middle">5</text><text x="28" y="106" font-family="Liberation Sans" font-size="7.5" font-weight="bold" fill="#e8c050" text-anchor="middle">6</text><text x="28" y="117.5" font-family="Liberation Sans" font-size="7.5" font-weight="bold" fill="#e8c050" text-anchor="middle">7</text><text x="28" y="129" font-family="Liberation Sans" font-size="7.5" font-weight="bold" fill="#e8c050" text-anchor="middle">8</text><text x="28" y="185" font-family="Liberation Sans" font-size="7.5" font-weight="bold" fill="#e8c050" text-anchor="middle">8</text><text x="28" y="197" font-family="Liberation Sans" font-size="7.5" font-weight="bold" fill="#e8c050" text-anchor="middle">7</text><text x="28" y="208" font-family="Liberation Sans" font-size="7.5" font-weight="bold" fill="#e8c050" text-anchor="middle">6</text><text x="28" y="220" font-family="Liberation Sans" font-size="7" font-weight="bold" fill="#2a2410" text-anchor="middle">5</text><text x="28" y="232" font-family="Liberation Sans" font-size="7" font-weight="bold" fill="#2a2410" text-anchor="middle">4</text><text x="28" y="244" font-family="Liberation Sans" font-size="7" font-weight="bold" fill="#2a2410" text-anchor="middle">3</text><text x="28" y="255.5" font-family="Liberation Sans" font-size="7" font-weight="bold" fill="#2a2410" text-anchor="middle">2</text><text x="28" y="267" font-family="Liberation Sans" font-size="7" font-weight="bold" fill="#2a2410" text-anchor="middle">1</text><text x="54" y="157" font-family="Liberation Sans" font-size="7" font-weight="bold" fill="#f0da88" text-anchor="middle">8</text><text x="65" y="157" font-family="Liberation Sans" font-size="7" font-weight="bold" fill="#f0da88" text-anchor="middle">7</text><text x="77" y="157" font-family="Liberation Sans" font-size="7" font-weight="bold" fill="#f0da88" text-anchor="middle">6</text><text x="88" y="157" font-family="Liberation Sans" font-size="7" font-weight="bold" fill="#2a2410" text-anchor="middle">5</text><text x="100" y="157" font-family="Liberation Sans" font-size="7" font-weight="bold" fill="#2a2410" text-anchor="middle">4</text><text x="111" y="157" font-family="Liberation Sans" font-size="7" font-weight="bold" fill="#2a2410" text-anchor="middle">3</text><text x="124" y="157" font-family="Liberation Sans" font-size="7" font-weight="bold" fill="#2a2410" text-anchor="middle">2</text><text x="28" y="142" font-family="Liberation Sans" font-size="7" fill="#2a2410" text-anchor="middle">9</text><text x="28" y="174" font-family="Liberation Sans" font-size="7" fill="#2a2410" text-anchor="middle">9</text><text x="12" y="157" font-family="Liberation Sans" font-size="7" fill="#2a2410" text-anchor="middle">9</text><text x="44" y="157" font-family="Liberation Sans" font-size="7" fill="#2a2410" text-anchor="middle">9</text><rect x="96" y="36" width="53" height="14" fill="#1a1a1a"/><text x="99" y="48" font-family="Liberation Sans" font-size="11" font-weight="bold" fill="#f0e0a0" textLength="48" lengthAdjust="spacingAndGlyphs">DIANA</text><text x="92" y="260" font-family="Liberation Sans" font-size="6" fill="#2a2410">Name:</text><rect x="137" y="45" width="12" height="231" rx="3" fill="#1a1810"/><rect x="0" y="269" width="135" height="12" fill="#1a1810"/><rect x="135" y="269" width="14" height="12" fill="#efe0a0"/><polygon points="278,29 580,31 580,325 278,325" fill="url(#sp)"/><circle cx="428.5" cy="181.5" r="137.6" fill="none" stroke="#7a5400" stroke-width="0.8"/><circle cx="428.5" cy="181.5" r="123.5" fill="none" stroke="#7a5400" stroke-width="0.8"/><circle cx="428.5" cy="181.5" r="109.4" fill="none" stroke="#7a5400" stroke-width="0.8"/><circle cx="428.5" cy="181.5" r="95.3" fill="none" stroke="#7a5400" stroke-width="0.8"/><circle cx="428.5" cy="181.5" r="81.2" fill="none" stroke="#7a5400" stroke-width="0.8"/><circle cx="428.5" cy="181.5" r="67.1" fill="none" stroke="#7a5400" stroke-width="0.8"/><circle cx="428.5" cy="181.5" r="52.4" fill="#2c2612"/><circle cx="428.5" cy="181.5" r="38.3" fill="none" stroke="#d8c060" stroke-width="0.8"/><circle cx="428.5" cy="181.5" r="24.2" fill="none" stroke="#d8c060" stroke-width="0.8"/><circle cx="428.5" cy="181.5" r="10" fill="none" stroke="#d8c060" stroke-width="0.8"/><circle cx="428.5" cy="181.5" r="4" fill="none" stroke="#d8c060" stroke-width="0.8"/><text x="428.5" y="53.5" font-family="Liberation Sans" font-size="6" fill="#3a3010" text-anchor="middle">1</text><text x="428.5" y="314.5" font-family="Liberation Sans" font-size="6" fill="#3a3010" text-anchor="middle">1</text><text x="298.0" y="184.0" font-family="Liberation Sans" font-size="6" fill="#3a3010" text-anchor="middle">1</text><text x="559.0" y="184.0" font-family="Liberation Sans" font-size="6" fill="#3a3010" text-anchor="middle">1</text><text x="428.5" y="67.6" font-family="Liberation Sans" font-size="6" fill="#3a3010" text-anchor="middle">2</text><text x="428.5" y="300.4" font-family="Liberation Sans" font-size="6" fill="#3a3010" text-anchor="middle">2</text><text x="312.1" y="184.0" font-family="Liberation Sans" font-size="6" fill="#3a3010" text-anchor="middle">2</text><text x="544.9" y="184.0" font-family="Liberation Sans" font-size="6" fill="#3a3010" text-anchor="middle">2</text><text x="428.5" y="81.7" font-family="Liberation Sans" font-size="6" fill="#3a3010" text-anchor="middle">3</text><text x="428.5" y="286.3" font-family="Liberation Sans" font-size="6" fill="#3a3010" text-anchor="middle">3</text><text x="326.2" y="184.0" font-family="Liberation Sans" font-size="6" fill="#3a3010" text-anchor="middle">3</text><text x="530.8" y="184.0" font-family="Liberation Sans" font-size="6" fill="#3a3010" text-anchor="middle">3</text><text x="428.5" y="95.8" font-family="Liberation Sans" font-size="6" fill="#3a3010" text-anchor="middle">4</text><text x="428.5" y="272.2" font-family="Liberation Sans" font-size="6" fill="#3a3010" text-anchor="middle">4</text><text x="340.3" y="184.0" font-family="Liberation Sans" font-size="6" fill="#3a3010" text-anchor="middle">4</text><text x="516.7" y="184.0" font-family="Liberation Sans" font-size="6" fill="#3a3010" text-anchor="middle">4</text><text x="428.5" y="109.9" font-family="Liberation Sans" font-size="6" fill="#3a3010" text-anchor="middle">5</text><text x="428.5" y="258.1" font-family="Liberation Sans" font-size="6" fill="#3a3010" text-anchor="middle">5</text><text x="354.4" y="184.0" font-family="Liberation Sans" font-size="6" fill="#3a3010" text-anchor="middle">5</text><text x="502.6" y="184.0" font-family="Liberation Sans" font-size="6" fill="#3a3010" text-anchor="middle">5</text><text x="428.5" y="124.0" font-family="Liberation Sans" font-size="6" fill="#3a3010" text-anchor="middle">6</text><text x="428.5" y="244.0" font-family="Liberation Sans" font-size="6" fill="#3a3010" text-anchor="middle">6</text><text x="368.5" y="184.0" font-family="Liberation Sans" font-size="6" fill="#3a3010" text-anchor="middle">6</text><text x="488.5" y="184.0" font-family="Liberation Sans" font-size="6" fill="#3a3010" text-anchor="middle">6</text><text x="428.5" y="138.7" font-family="Liberation Sans" font-size="6.5" font-weight="bold" fill="#e0cc70" text-anchor="middle">7</text><text x="428.5" y="229.3" font-family="Liberation Sans" font-size="6.5" font-weight="bold" fill="#e0cc70" text-anchor="middle">7</text><text x="383.2" y="184.0" font-family="Liberation Sans" font-size="6.5" font-weight="bold" fill="#e0cc70" text-anchor="middle">7</text><text x="473.8" y="184.0" font-family="Liberation Sans" font-size="6.5" font-weight="bold" fill="#e0cc70" text-anchor="middle">7</text><text x="428.5" y="152.8" font-family="Liberation Sans" font-size="6.5" font-weight="bold" fill="#e0cc70" text-anchor="middle">8</text><text x="428.5" y="215.2" font-family="Liberation Sans" font-size="6.5" font-weight="bold" fill="#e0cc70" text-anchor="middle">8</text><text x="397.3" y="184.0" font-family="Liberation Sans" font-size="6.5" font-weight="bold" fill="#e0cc70" text-anchor="middle">8</text><text x="459.7" y="184.0" font-family="Liberation Sans" font-size="6.5" font-weight="bold" fill="#e0cc70" text-anchor="middle">8</text><circle cx="405" cy="164" r="4" fill="#0e0c06"/><circle cx="420" cy="192" r="4" fill="#0e0c06"/><circle cx="445" cy="198" r="4" fill="#0e0c06"/><circle cx="453" cy="194" r="4" fill="#0e0c06"/><circle cx="382" cy="200" r="4" fill="#0e0c06"/><circle cx="395" cy="200" r="4" fill="#0e0c06"/><circle cx="419" cy="209" r="4" fill="#0e0c06"/><circle cx="408" cy="212" r="4" fill="#0e0c06"/><circle cx="430" cy="214" r="4" fill="#0e0c06"/><circle cx="414" cy="223" r="4" fill="#0e0c06"/><circle cx="427" cy="204" r="4" fill="#0e0c06"/><text x="303" y="51" font-family="Liberation Sans" font-size="14" font-weight="bold" fill="#2a2410" textLength="31" lengthAdjust="spacingAndGlyphs">SWS</text><text x="290" y="58" font-family="Liberation Sans" font-size="4" fill="#3a3010" textLength="60" lengthAdjust="spacingAndGlyphs">www.versandhaus-schneider.de</text><text x="509" y="53" font-family="Liberation Mono" font-size="11" fill="#6a5a2a" textLength="40" lengthAdjust="spacingAndGlyphs">007133</text><rect x="559" y="46" width="9" height="52" fill="none" stroke="#9a8a40" stroke-width="0.6"/><line x1="559" y1="54" x2="568" y2="54" stroke="#9a8a40" stroke-width="0.5"/><line x1="559" y1="62" x2="568" y2="62" stroke="#9a8a40" stroke-width="0.5"/><line x1="559" y1="70" x2="568" y2="70" stroke="#9a8a40" stroke-width="0.5"/><line x1="559" y1="78" x2="568" y2="78" stroke="#9a8a40" stroke-width="0.5"/><line x1="559" y1="86" x2="568" y2="86" stroke="#9a8a40" stroke-width="0.5"/><line x1="559" y1="94" x2="568" y2="94" stroke="#9a8a40" stroke-width="0.5"/><circle cx="295" cy="310" r="6" fill="none" stroke="#2a2410" stroke-width="1.5"/><circle cx="295" cy="310" r="2.5" fill="#2a2410"/><rect x="275" y="40" width="14" height="280" rx="4" fill="#1e1c12"/><rect x="567" y="42" width="15" height="278" rx="4" fill="#1e1c12"/><rect x="288" y="318" width="280" height="16" fill="#1e1c12"/><rect x="274" y="320" width="14" height="12" fill="#efe0a0"/><rect x="568" y="320" width="14" height="12" fill="#efe0a0"/><rect x="632" y="0" width="6" height="358" fill="#ffffff"/></svg><svg style="left:0;top:0" width="0" height="0"><defs><pattern id="dots" x="0" y="0" width="4" height="4" patternUnits="userSpaceOnUse"><rect x="0" y="0" width="1" height="1" fill="#778899"/><rect x="1" y="1" width="1" height="1" fill="#ffffff"/><rect x="2" y="2" width="1" height="1" fill="#778899"/><rect x="3" y="3" width="1" height="1" fill="#ffffff"/></pattern></defs></svg><svg style="left:12px;top:468px" width="697" height="4"><rect width="697" height="4" fill="url(#dots)"/></svg><svg style="left:12px;top:659px" width="697" height="4"><rect width="697" height="4" fill="url(#dots)"/></svg><svg style="left:359px;top:477px" width="4" height="172"><rect width="4" height="172" fill="url(#dots)"/></svg><svg style="left:714px;top:66px" width="4" height="776"><rect width="4" height="776" fill="url(#dots)"/></svg><div class="a" style="left:10px;top:473px;width:344px;height:178px;border-top:4px solid #778899;border-left:5px solid #778899;border-right:2px solid #778899;border-bottom:1px solid #778899;box-sizing:border-box;background:#eeeeee;"></div><div class="a" style="left:354px;top:473px;width:2px;height:178px;background:#fff;"></div><div class="a" style="left:15px;top:477px;width:337px;height:19px;background:#eeeeee;border-top:1px solid #fff;box-sizing:border-box;"></div><div class="a" style="left:15px;top:496px;width:337px;height:1px;background:#778899;"></div><div class="t" style="left:15px;top:482px;width:128px;text-align:center;font-size:12px;color:#222;">Brand</div><div class="t" style="left:143px;top:482px;width:129px;text-align:center;font-size:12px;color:#222;">Type</div><div class="a" style="left:143px;top:478px;width:1px;height:18px;background:#778899;"></div><div class="a" style="left:144px;top:478px;width:1px;height:18px;background:#fff;"></div><div class="t" style="left:272px;top:482px;width:80px;text-align:center;font-size:12px;color:#222;">Caliber</div><div class="a" style="left:272px;top:478px;width:1px;height:18px;background:#778899;"></div><div class="a" style="left:273px;top:478px;width:1px;height:18px;background:#fff;"></div><div class="a" style="left:352px;top:478px;width:1px;height:18px;background:#778899;"></div><div class="a" style="left:15px;top:497px;width:337px;height:16px;background:#ffffff;"></div><div class="a" style="left:15px;top:512px;width:337px;height:1px;background:#778899;"></div><div class="t" style="left:15px;top:499px;width:128px;text-align:center;font-size:12px;color:#1a1a1a;">Steyr</div><div class="t" style="left:143px;top:499px;width:129px;text-align:center;font-size:12px;color:#1a1a1a;">LP 1</div><div class="t" style="left:272px;top:499px;width:80px;text-align:center;font-size:12px;color:#1a1a1a;">4.5</div><div class="a" style="left:15px;top:513px;width:337px;height:16px;background:#ffffff;"></div><div class="a" style="left:15px;top:528px;width:337px;height:1px;background:#778899;"></div><div class="a" style="left:15px;top:529px;width:337px;height:16px;background:#d4d4d4;"></div><div class="a" style="left:15px;top:544px;width:337px;height:1px;background:#778899;"></div><div class="t" style="left:15px;top:531px;width:128px;text-align:center;font-size:12px;color:#1a1a1a;font-weight:bold;color:#000;">SightDistance [m]</div><div class="t" style="left:143px;top:531px;width:129px;text-align:center;font-size:12px;color:#1a1a1a;font-weight:bold;color:#000;">Adjustment H</div><div class="t" style="left:272px;top:531px;width:80px;text-align:center;font-size:12px;color:#1a1a1a;font-weight:bold;color:#000;">Adjustment V</div><div class="a" style="left:15px;top:545px;width:337px;height:16px;background:#ffffff;"></div><div class="a" style="left:15px;top:560px;width:337px;height:1px;background:#778899;"></div><div class="t" style="left:15px;top:547px;width:128px;text-align:center;font-size:12px;color:#1a1a1a;">10.0</div><div class="t" style="left:143px;top:547px;width:129px;text-align:center;font-size:12px;color:#1a1a1a;">1.2</div><div class="t" style="left:272px;top:547px;width:80px;text-align:center;font-size:12px;color:#1a1a1a;">1.2</div><div class="a" style="left:15px;top:561px;width:337px;height:16px;background:#ffffff;"></div><div class="a" style="left:15px;top:576px;width:337px;height:1px;background:#778899;"></div><div class="a" style="left:15px;top:577px;width:337px;height:16px;background:#d4d4d4;"></div><div class="a" style="left:15px;top:592px;width:337px;height:1px;background:#778899;"></div><div class="a" style="left:15px;top:593px;width:337px;height:16px;background:#ffffff;"></div><div class="a" style="left:15px;top:608px;width:337px;height:1px;background:#778899;"></div><div class="a" style="left:15px;top:609px;width:337px;height:16px;background:#ffffff;"></div><div class="a" style="left:15px;top:624px;width:337px;height:1px;background:#778899;"></div><div class="a" style="left:15px;top:625px;width:337px;height:16px;background:#ffffff;"></div><div class="a" style="left:15px;top:640px;width:337px;height:1px;background:#778899;"></div><div class="a" style="left:143px;top:497px;width:1px;height:144px;background:#778899;"></div><div class="a" style="left:272px;top:497px;width:1px;height:144px;background:#778899;"></div><div class="a" style="left:352px;top:497px;width:1px;height:144px;background:#778899;"></div><div class="a" style="left:364px;top:473px;width:343px;height:178px;border-top:4px solid #778899;border-left:2px solid #778899;border-right:2px solid #778899;border-bottom:1px solid #778899;box-sizing:border-box;background:#eeeeee;"></div><div class="a" style="left:366px;top:477px;width:338px;height:19px;background:#eeeeee;border-top:1px solid #fff;box-sizing:border-box;"></div><div class="a" style="left:366px;top:496px;width:338px;height:1px;background:#778899;"></div><div class="t" style="left:366px;top:482px;width:112px;text-align:center;font-size:12px;color:#222;">Description</div><div class="t" style="left:478px;top:482px;width:113px;text-align:center;font-size:12px;color:#222;">X</div><div class="a" style="left:478px;top:478px;width:1px;height:18px;background:#778899;"></div><div class="a" style="left:479px;top:478px;width:1px;height:18px;background:#fff;"></div><div class="t" style="left:591px;top:482px;width:113px;text-align:center;font-size:12px;color:#222;">Y</div><div class="a" style="left:591px;top:478px;width:1px;height:18px;background:#778899;"></div><div class="a" style="left:592px;top:478px;width:1px;height:18px;background:#fff;"></div><div class="a" style="left:704px;top:478px;width:1px;height:18px;background:#778899;"></div><div class="a" style="left:366px;top:497px;width:338px;height:16px;background:#ffffff;"></div><div class="a" style="left:366px;top:512px;width:338px;height:1px;background:#778899;"></div><div class="t" style="left:367px;top:499px;font-size:12px;color:#1a1a1a;">Target Center</div><div class="t" style="left:479px;top:499px;font-size:12px;color:#1a1a1a;">463,00</div><div class="t" style="left:592px;top:499px;font-size:12px;color:#1a1a1a;">519,00</div><div class="a" style="left:366px;top:513px;width:338px;height:16px;background:#ffffff;"></div><div class="a" style="left:366px;top:528px;width:338px;height:1px;background:#778899;"></div><div class="a" style="left:366px;top:529px;width:338px;height:16px;background:#ffffff;"></div><div class="a" style="left:366px;top:544px;width:338px;height:1px;background:#778899;"></div><div class="t" style="left:367px;top:531px;font-size:12px;color:#1a1a1a;">ScatterCircle</div><div class="t" style="left:479px;top:531px;font-size:12px;color:#1a1a1a;">38,84</div><div class="t" style="left:592px;top:531px;font-size:12px;color:#1a1a1a;">mm</div><div class="a" style="left:366px;top:545px;width:338px;height:16px;background:#ffffff;"></div><div class="a" style="left:366px;top:560px;width:338px;height:1px;background:#778899;"></div><div class="a" style="left:366px;top:561px;width:338px;height:16px;background:#ffffff;"></div><div class="a" style="left:366px;top:576px;width:338px;height:1px;background:#778899;"></div><div class="t" style="left:367px;top:563px;font-size:12px;color:#1a1a1a;">Adjustment [px]</div><div class="t" style="left:479px;top:563px;font-size:12px;color:#1a1a1a;">-34,82</div><div class="t" style="left:592px;top:563px;font-size:12px;color:#1a1a1a;">-29,89</div><div class="a" style="left:366px;top:577px;width:338px;height:16px;background:#ffffff;"></div><div class="a" style="left:366px;top:592px;width:338px;height:1px;background:#778899;"></div><div class="t" style="left:367px;top:579px;font-size:12px;color:#1a1a1a;">Adjustment [mm]</div><div class="t" style="left:479px;top:579px;font-size:12px;color:#1a1a1a;">-7,65</div><div class="t" style="left:592px;top:579px;font-size:12px;color:#1a1a1a;">-6,57</div><div class="a" style="left:366px;top:593px;width:338px;height:16px;background:#ffffff;"></div><div class="a" style="left:366px;top:608px;width:338px;height:1px;background:#778899;"></div><div class="a" style="left:366px;top:609px;width:338px;height:16px;background:#ffffff;"></div><div class="a" style="left:366px;top:624px;width:338px;height:1px;background:#778899;"></div><div class="a" style="left:366px;top:625px;width:338px;height:16px;background:#ffffff;"></div><div class="a" style="left:366px;top:640px;width:338px;height:1px;background:#778899;"></div><div class="a" style="left:478px;top:497px;width:1px;height:144px;background:#778899;"></div><div class="a" style="left:591px;top:497px;width:1px;height:144px;background:#778899;"></div><div class="a" style="left:704px;top:497px;width:1px;height:144px;background:#778899;"></div><div class="a" style="left:10px;top:663px;width:697px;height:178px;border-top:2px solid #778899;border-left:4px solid #778899;box-sizing:border-box;background:#eeeeee;"></div><div class="a" style="left:14px;top:665px;width:677px;height:19px;background:#eeeeee;border-top:1px solid #fff;box-sizing:border-box;"></div><div class="a" style="left:14px;top:684px;width:677px;height:1px;background:#778899;"></div><div class="t" style="left:14px;top:670px;width:191px;text-align:center;font-size:12px;color:#222;">Round</div><div class="t" style="left:205px;top:670px;width:292px;text-align:center;font-size:12px;color:#222;">Point</div><div class="a" style="left:205px;top:666px;width:1px;height:18px;background:#778899;"></div><div class="a" style="left:206px;top:666px;width:1px;height:18px;background:#fff;"></div><div class="t" style="left:497px;top:670px;width:194px;text-align:center;font-size:12px;color:#222;">Direction</div><div class="a" style="left:497px;top:666px;width:1px;height:18px;background:#778899;"></div><div class="a" style="left:498px;top:666px;width:1px;height:18px;background:#fff;"></div><div class="a" style="left:691px;top:666px;width:1px;height:18px;background:#778899;"></div><div class="a" style="left:14px;top:685px;width:677px;height:16px;background:#ffffff;"></div><div class="a" style="left:14px;top:700px;width:677px;height:1px;background:#778899;"></div><div class="t" style="left:15px;top:687px;font-size:12px;color:#1a1a1a;">1</div><div class="t" style="left:206px;top:687px;font-size:12px;color:#1a1a1a;">8,00</div><div class="t" style="left:498px;top:687px;font-size:12px;color:#1a1a1a;">---</div><div class="a" style="left:14px;top:701px;width:677px;height:16px;background:#ffffff;"></div><div class="a" style="left:14px;top:716px;width:677px;height:1px;background:#778899;"></div><div class="t" style="left:15px;top:703px;font-size:12px;color:#1a1a1a;">2</div><div class="t" style="left:206px;top:703px;font-size:12px;color:#1a1a1a;">8,00</div><div class="t" style="left:498px;top:703px;font-size:12px;color:#1a1a1a;">---</div><div class="a" style="left:14px;top:717px;width:677px;height:16px;background:#ffffff;"></div><div class="a" style="left:14px;top:732px;width:677px;height:1px;background:#778899;"></div><div class="t" style="left:15px;top:719px;font-size:12px;color:#1a1a1a;">3</div><div class="t" style="left:206px;top:719px;font-size:12px;color:#1a1a1a;">9,00</div><div class="t" style="left:498px;top:719px;font-size:12px;color:#1a1a1a;">---</div><div class="a" style="left:14px;top:733px;width:677px;height:16px;background:#ffffff;"></div><div class="a" style="left:14px;top:748px;width:677px;height:1px;background:#778899;"></div><div class="t" style="left:15px;top:735px;font-size:12px;color:#1a1a1a;">4</div><div class="t" style="left:206px;top:735px;font-size:12px;color:#1a1a1a;">8,00</div><div class="t" style="left:498px;top:735px;font-size:12px;color:#1a1a1a;">---</div><div class="a" style="left:14px;top:749px;width:677px;height:16px;background:#ffffff;"></div><div class="a" style="left:14px;top:764px;width:677px;height:1px;background:#778899;"></div><div class="t" style="left:15px;top:751px;font-size:12px;color:#1a1a1a;">5</div><div class="t" style="left:206px;top:751px;font-size:12px;color:#1a1a1a;">7,00</div><div class="t" style="left:498px;top:751px;font-size:12px;color:#1a1a1a;">---</div><div class="a" style="left:14px;top:765px;width:677px;height:16px;background:#ffffff;"></div><div class="a" style="left:14px;top:780px;width:677px;height:1px;background:#778899;"></div><div class="t" style="left:15px;top:767px;font-size:12px;color:#1a1a1a;">6</div><div class="t" style="left:206px;top:767px;font-size:12px;color:#1a1a1a;">8,00</div><div class="t" style="left:498px;top:767px;font-size:12px;color:#1a1a1a;">---</div><div class="a" style="left:14px;top:781px;width:677px;height:16px;background:#ffffff;"></div><div class="a" style="left:14px;top:796px;width:677px;height:1px;background:#778899;"></div><div class="t" style="left:15px;top:783px;font-size:12px;color:#1a1a1a;">7</div><div class="t" style="left:206px;top:783px;font-size:12px;color:#1a1a1a;">10,00</div><div class="t" style="left:498px;top:783px;font-size:12px;color:#1a1a1a;">---</div><div class="a" style="left:14px;top:797px;width:677px;height:16px;background:#ffffff;"></div><div class="a" style="left:14px;top:812px;width:677px;height:1px;background:#778899;"></div><div class="t" style="left:15px;top:799px;font-size:12px;color:#1a1a1a;">8</div><div class="t" style="left:206px;top:799px;font-size:12px;color:#1a1a1a;">9,00</div><div class="t" style="left:498px;top:799px;font-size:12px;color:#1a1a1a;">---</div><div class="a" style="left:14px;top:813px;width:677px;height:16px;background:#ffffff;"></div><div class="a" style="left:14px;top:828px;width:677px;height:1px;background:#778899;"></div><div class="t" style="left:15px;top:815px;font-size:12px;color:#1a1a1a;">9</div><div class="t" style="left:206px;top:815px;font-size:12px;color:#1a1a1a;">8,00</div><div class="t" style="left:498px;top:815px;font-size:12px;color:#1a1a1a;">---</div><div class="a" style="left:14px;top:829px;width:677px;height:12px;background:#ffffff;"></div><div class="t" style="left:15px;top:831px;font-size:12px;color:#1a1a1a;">10</div><div class="t" style="left:206px;top:831px;font-size:12px;color:#1a1a1a;">9,00</div><div class="t" style="left:498px;top:831px;font-size:12px;color:#1a1a1a;">---</div><div class="a" style="left:205px;top:685px;width:1px;height:156px;background:#778899;"></div><div class="a" style="left:497px;top:685px;width:1px;height:156px;background:#778899;"></div><div class="a" style="left:691px;top:685px;width:1px;height:156px;background:#778899;"></div><div class="a" style="left:14px;top:840px;width:677px;height:1px;background:#778899;"></div><div class="a" style="left:691px;top:666px;width:15px;height:18px;background:#eeeeee;border-right:1px solid #778899;box-sizing:border-box;"></div><div class="a" style="left:691px;top:684px;width:15px;height:156px;background:#eeeeee;border-right:1px solid #778899;border-bottom:1px solid #778899;box-sizing:border-box;"></div><svg style="left:691px;top:684px" width="15" height="156"><path d="M3.5 11.5L7.5 7.5L11.5 11.5Z" fill="#222"/><defs><linearGradient id="sth" x1="0" x2="1"><stop offset="0" stop-color="#f4f8fc"/><stop offset="0.5" stop-color="#d5e2ef"/><stop offset="1" stop-color="#b9cde2"/></linearGradient></defs><rect x="1.5" y="16.5" width="12" height="121" fill="url(#sth)" stroke="#7b9ec8"/><path d="M4 73.5H11M4 75.5H11M4 77.5H11" stroke="#7b9ec8"/><path d="M3.5 144.5L7.5 148.5L11.5 144.5Z" fill="#222"/></svg><div class="a" style="left:10px;top:845px;width:1564px;height:36px;background:#c0c0c0;"></div><div class="a" style="left:683px;top:850px;width:66px;height:26px;border:1px solid #778899;box-sizing:border-box;background:linear-gradient(#e6edf6,#ffffff 25%,#dce7f2 60%,#bfd3e9);"></div><div class="t" style="left:683px;top:858px;width:66px;text-align:center;font-size:12px;font-weight:bold;color:#222;">Close</div><div class="a" style="left:754px;top:850px;width:79px;height:26px;border:1px solid #778899;box-sizing:border-box;background:linear-gradient(#e6edf6,#ffffff 25%,#dce7f2 60%,#bfd3e9);"></div><div class="t" style="left:754px;top:858px;width:79px;text-align:center;font-size:12px;font-weight:bold;color:#222;">Refresh</div><div class="a" style="left:838px;top:850px;width:62px;height:26px;border:1px solid #778899;box-sizing:border-box;background:linear-gradient(#e6edf6,#ffffff 25%,#dce7f2 60%,#bfd3e9);"></div><div class="t" style="left:838px;top:858px;width:62px;text-align:center;font-size:12px;font-weight:bold;color:#222;">Start</div><div class="a" style="left:854px;top:854px;width:30px;height:18px;border:1px solid #a8bbd3;box-sizing:border-box;"></div><div class="a" style="left:718px;top:63px;width:857px;height:781px;border-top:2px solid #778899;border-left:2px solid #778899;border-right:1px solid #fff;border-bottom:1px solid #fff;box-sizing:border-box;"></div><div class="a" style="left:722px;top:72px;width:850px;height:770px;border:1px solid #b8cfe5;box-sizing:border-box;"></div><div class="a" style="left:726px;top:66px;width:74px;height:12px;background:#eeeeee;"></div><div class="t" style="left:728px;top:67px;font-size:12px;font-weight:bold;color:#1e2030;">TargetPanel</div><svg style="left:771px;top:87px" width="750" height="750" viewBox="0 0 750 750"><rect x="0.5" y="0.5" width="749" height="749" fill="#fff" stroke="#333" stroke-width="1"/><circle cx="375.5" cy="375.5" r="355.00" fill="none" stroke="#000" stroke-width="1.2"/><circle cx="375.5" cy="375.5" r="318.45" fill="none" stroke="#000" stroke-width="1.2"/><circle cx="375.5" cy="375.5" r="281.90" fill="none" stroke="#000" stroke-width="1.2"/><circle cx="375.5" cy="375.5" r="245.35" fill="none" stroke="#000" stroke-width="1.2"/><circle cx="375.5" cy="375.5" r="208.80" fill="none" stroke="#000" stroke-width="1.2"/><circle cx="375.5" cy="375.5" r="172.25" fill="none" stroke="#000" stroke-width="1.2"/><circle cx="375.5" cy="375.5" r="135.70" fill="#808080" stroke="#000" stroke-width="1.2"/><circle cx="375.5" cy="375.5" r="99.15" fill="none" stroke="#000" stroke-width="1.2"/><circle cx="375.5" cy="375.5" r="62.60" fill="none" stroke="#000" stroke-width="1.2"/><circle cx="375.5" cy="375.5" r="26.05" fill="none" stroke="#000" stroke-width="1.2"/><circle cx="375.5" cy="375.5" r="11" fill="none" stroke="#000" stroke-width="1.2"/><line x1="1" y1="375.5" x2="749" y2="375.5" stroke="#000" stroke-width="1.2"/><line x1="375.5" y1="1" x2="375.5" y2="749" stroke="#000" stroke-width="1.2"/><circle cx="311.9" cy="331.7" r="9.8" fill="#00ffff"/><circle cx="351.6" cy="400.7" r="9.8" fill="#00ffff"/><circle cx="286.8" cy="424.8" r="9.8" fill="#00ffff"/><circle cx="329.8" cy="459.4" r="9.8" fill="#00ffff"/><circle cx="337.9" cy="482.7" r="9.8" fill="#00ffff"/><circle cx="368.9" cy="444.6" r="9.8" fill="#00ffff"/><circle cx="375.9" cy="452.5" r="9.8" fill="#00ffff"/><circle cx="378.7" cy="467.8" r="9.8" fill="#00ffff"/><circle cx="395.8" cy="417.5" r="9.8" fill="#00ffff"/><circle cx="418.1" cy="411.9" r="9.8" fill="#00ffff"/><circle cx="340.7" cy="405.6" r="88.5" fill="none" stroke="#e020e0" stroke-width="1.3"/><circle cx="339.6" cy="404.9" r="3" fill="#ff00ff"/><text x="53" y="60" font-family="Liberation Sans" font-size="31" font-weight="bold" fill="#000">84</text><text x="650" y="60" font-family="Liberation Sans" font-size="31" font-weight="bold" fill="#000">8,40</text><defs><linearGradient id="cb0" x1="0" y1="0" x2="1" y2="1"><stop offset="0" stop-color="#fdfdfd"/><stop offset="1" stop-color="#c8d6e6"/></linearGradient></defs><rect x="9.5" y="709.5" width="12" height="12" fill="url(#cb0)" stroke="#7d93ad" stroke-width="1"/><polygon points="11.6,714.3 13.6,713.9 13.7,716.4 18.6,711.0 19.6,712.3 13.6,719.3 11.8,719.3" fill="#1e1e1e"/><text x="27" y="720" font-family="Liberation Sans" font-size="11.8" font-weight="bold" fill="#000">Show Hit</text><defs><linearGradient id="cb1" x1="0" y1="0" x2="1" y2="1"><stop offset="0" stop-color="#fdfdfd"/><stop offset="1" stop-color="#c8d6e6"/></linearGradient></defs><rect x="9.5" y="729.5" width="12" height="12" fill="url(#cb1)" stroke="#7d93ad" stroke-width="1"/><polygon points="11.6,734.3 13.6,733.9 13.7,736.4 18.6,731.0 19.6,732.3 13.6,739.3 11.8,739.3" fill="#1e1e1e"/><text x="27" y="740" font-family="Liberation Sans" font-size="11.8" font-weight="bold" fill="#000">Show Scatter</text><defs><radialGradient id="lg" cx="0.5" cy="0.25" r="0.85"><stop offset="0" stop-color="#555"/><stop offset="0.6" stop-color="#2e2e2e"/><stop offset="1" stop-color="#161616"/></radialGradient><linearGradient id="lgw" x1="0" y1="0" x2="0" y2="1"><stop offset="0" stop-color="#e0e0e0"/><stop offset="1" stop-color="#707070"/></linearGradient></defs><g transform="translate(666,666)"><rect x="0" y="0" width="64" height="64" fill="url(#lg)"/><path d="M32 6 L50 17 L50 40 L32 60 L14 40 L14 17 Z" fill="none" stroke="#cfcfcf" stroke-width="1.6"/><path d="M32 10 L46 19 L46 38 L32 55 L18 38 L18 19 Z" fill="#262626" stroke="#8a8a8a" stroke-width="0.8"/><path d="M2 5 Q14 8 24 18 L30 26 L22 30 Q12 22 6 12 Z" fill="url(#lgw)"/><path d="M62 5 Q50 8 40 18 L34 26 L42 30 Q52 22 58 12 Z" fill="url(#lgw)"/><path d="M4 9 L22 22M6 14 L22 26M60 9 L42 22M58 14 L42 26" stroke="#3a3a3a" stroke-width="0.8"/><ellipse cx="32" cy="22" rx="5" ry="7" fill="#bdbdbd"/><circle cx="32" cy="14" r="3.2" fill="#d8d8d8"/><path d="M28 28 L36 28 L34 35 L30 35Z" fill="#9a9a9a"/><path d="M16 44 L32 50 L48 44 L48 47 L32 53 L16 47Z" fill="#8a1c1c"/><text x="32" y="43" font-family="Liberation Sans" font-size="10" font-weight="bold" fill="#ededed" text-anchor="middle" textLength="42" lengthAdjust="spacingAndGlyphs">BULLETHAWK</text><text x="32" y="56" font-family="Liberation Sans" font-size="11" font-weight="bold" fill="#e8e8e8" text-anchor="middle">M</text><circle cx="12" cy="55" r="4" fill="#6a6a6a" stroke="#999" stroke-width="0.8"/><circle cx="52" cy="55" r="4" fill="#6a6a6a" stroke="#999" stroke-width="0.8"/></g></svg></div><div class="a" style="left:0;top:1026px;width:1910px;height:47px;background:linear-gradient(90deg,#d6dfe8,#d9e1e8 50%,#dcdedb);"></div><svg style="left:12px;top:1034px" width="32" height="30"><circle cx="13" cy="17" r="9" fill="#f4a020"/><ellipse cx="8" cy="12" rx="6" ry="4" fill="#dce8f4"/><ellipse cx="18" cy="22" rx="7" ry="4" fill="#dce8f4"/><circle cx="21" cy="6" r="7.5" fill="#c42b1c"/><text x="21" y="10" font-family="Liberation Sans" font-size="10" fill="#fff" text-anchor="middle">1</text></svg><div class="t" style="left:45px;top:1036px;font-size:12px;color:#1a1a1a;">10°C</div><div class="t" style="left:45px;top:1052px;font-size:12px;color:#444;">Teilw. sonnig</div><svg style="left:502px;top:1039px" width="24" height="23"><rect x="0" y="0" width="11" height="11" fill="#1a9be8"/><rect x="12.5" y="0" width="11" height="11" fill="#1a9be8"/><rect x="0" y="12" width="11" height="11" fill="#1482d6"/><rect x="12.5" y="12" width="11" height="11" fill="#1482d6"/></svg><div class="a" style="left:539px;top:1035px;width:218px;height:30px;border-radius:15px;background:#eef1f4;border:1px solid #c8ced6;box-sizing:border-box;"></div><svg style="left:548px;top:1041px" width="20" height="20"><circle cx="8" cy="8" r="6" fill="none" stroke="#1a1a1a" stroke-width="1.8"/><path d="M12.5 12.5L17 17" stroke="#1a1a1a" stroke-width="2"/></svg><div class="t" style="left:575px;top:1043px;font-size:14px;color:#333;">Suche</div><svg style="left:768px;top:1038px" width="24" height="24"><defs><linearGradient id="tvg" x1="0" y1="0" x2="1" y2="1"><stop offset="0" stop-color="#d8d8d8"/><stop offset="1" stop-color="#9a9a9a"/></linearGradient></defs><rect x="8" y="1" width="16" height="15" rx="1" fill="#f4f4f4"/><rect x="2" y="7" width="18" height="16" rx="1" fill="#1e1e1e"/><rect x="8" y="7" width="12" height="9" fill="url(#tvg)"/></svg><svg style="left:814px;top:1038px" width="24" height="24"><defs><linearGradient id="cpl" x1="0.6" y1="0" x2="0.2" y2="1"><stop offset="0" stop-color="#1a6ff0"/><stop offset="0.45" stop-color="#34c0a0"/><stop offset="1" stop-color="#f4c010"/></linearGradient><linearGradient id="cpr" x1="0.8" y1="0" x2="0.3" y2="1"><stop offset="0" stop-color="#9a4cf0"/><stop offset="0.5" stop-color="#f0508a"/><stop offset="1" stop-color="#ff9a30"/></linearGradient></defs><path d="M9 1.5Q11 0.5 14 1.5L16.5 3L9.5 20Q8.5 23 5.5 22L3 20.5Q0.5 18 2 14Z" fill="url(#cpl)"/><path d="M15 4Q18 2.5 21 5Q23.5 8 22 11.5L16 21Q14 24 11 22.5L8.5 21L15.5 4Z" fill="url(#cpr)"/></svg><svg style="left:858px;top:1038px" width="24" height="24"><rect x="1" y="1" width="9" height="4" rx="1" fill="#e0a010"/><rect x="1" y="4" width="23" height="19" rx="1" fill="#f6c640"/><rect x="1" y="4" width="23" height="3" fill="#f8d060"/><rect x="7" y="16" width="12" height="7" rx="1.5" fill="#1a78d0"/><rect x="10" y="19" width="6" height="1" fill="#0e5aa8"/></svg><svg style="left:902px;top:1038px" width="24" height="24"><defs><linearGradient id="edg" x1="0" y1="1" x2="1" y2="0"><stop offset="0" stop-color="#0c59a4"/><stop offset="0.5" stop-color="#1b9de2"/><stop offset="1" stop-color="#4fd07a"/></linearGradient></defs><circle cx="12" cy="12" r="11.5" fill="url(#edg)"/><path d="M6 12Q6 6 12 6Q18 6 19 12Q19 15 15.5 15Q12 15 11.5 12.5Q11 17 15 19Q19 21 22 17Q21 22 14 23.5Q5 24 2.5 17Q2 12 6 12Z" fill="#0e62b4"/><circle cx="14.5" cy="12.3" r="2.6" fill="#dde4ea"/></svg><svg style="left:945px;top:1038px" width="24" height="24"><path d="M8 6V3h8v3" fill="none" stroke="#30a8e8" stroke-width="2"/><rect x="2" y="6" width="20" height="17" rx="3" fill="#1c4f8c"/><rect x="7" y="10" width="4" height="4" fill="#f25022"/><rect x="12" y="10" width="4" height="4" fill="#7fba00"/><rect x="7" y="15" width="4" height="4" fill="#00a4ef"/><rect x="12" y="15" width="4" height="4" fill="#ffb900"/></svg><svg style="left:990px;top:1038px" width="24" height="24"><rect x="2" y="5" width="20" height="14" rx="4" fill="#ee1c30"/><path d="M10 9l5 3-5 3z" fill="#fff"/></svg><svg style="left:1034px;top:1038px" width="24" height="24"><rect x="0" y="0" width="24" height="24" fill="#000"/><path d="M7 3h3l4 12V3h3v18h-3L10 9v12H7z" fill="#e50914"/></svg><svg style="left:1078px;top:1038px" width="24" height="24"><circle cx="12" cy="12" r="12" fill="#1877f2"/><path d="M13.5 24v-8h3l.5-3.5h-3.5v-2c0-1 .5-1.8 2-1.8h1.6V5.5c-.5-.1-1.6-.2-2.6-.2-2.6 0-4.3 1.6-4.3 4.5v2.7H7.5V16h2.7v8z" fill="#fff"/></svg><svg style="left:1122px;top:1038px" width="24" height="24"><path d="M12 12L1.6 6A12 12 0 0 1 22.4 6z" fill="#db4437"/><path d="M12 12L22.4 6A12 12 0 0 1 12 24z" fill="#f4b400"/><path d="M12 12L12 24A12 12 0 0 1 1.6 6z" fill="#0f9d58"/><circle cx="12" cy="12" r="5.5" fill="#fff"/><circle cx="12" cy="12" r="4.3" fill="#4285f4"/></svg><svg style="left:1166px;top:1038px" width="24" height="24"><rect x="0" y="0" width="24" height="24" fill="#fff"/><text x="12" y="16" font-family="Liberation Sans" font-size="16" font-weight="bold" fill="#111" text-anchor="middle">a</text><path d="M5 18q7 4 14 0" fill="none" stroke="#f90" stroke-width="1.8"/></svg><svg style="left:1210px;top:1038px" width="24" height="24"><rect x="4" y="2" width="16" height="21" fill="#3cb0e0"/><path d="M7 7h10M7 11h10M7 15h10" stroke="#1a6090" stroke-width="1.6"/><rect x="4" y="21" width="16" height="2" fill="#8a4010"/></svg><svg style="left:1254px;top:1038px" width="24" height="24"><path d="M12 1l10 5.5v11L12 23 2 17.5v-11z" fill="#c63a5a"/><path d="M12 1l10 5.5L12 12 2 6.5z" fill="#8cc63e"/><path d="M12 12l10-5.5v11L12 23z" fill="#3a88d0"/><path d="M12 6l5 3v6l-5 3-5-3V9z" fill="#f4f4f4"/></svg><svg style="left:1298px;top:1038px" width="24" height="24"><circle cx="12" cy="12" r="11" fill="#f0a020"/><circle cx="12" cy="12" r="11" fill="none" stroke="#e02030" stroke-width="4" stroke-dasharray="40 30"/><path d="M7 8h10v5q0 5-5 7q-5-2-5-7z" fill="#fff"/></svg><div class="a" style="left:1335px;top:1031px;width:34px;height:38px;border-radius:4px;background:#eef2f6;"></div><svg style="left:1342px;top:1038px" width="24" height="24"><rect width="24" height="24" fill="#2a2a2a"/><path d="M3 5l9 6 9-6-4 10h-10z" fill="#9a9a9a"/><rect x="6" y="15" width="12" height="3" fill="#ddd"/></svg><div class="a" style="left:1344px;top:1067px;width:20px;height:3px;border-radius:2px;background:#1a73d0;"></div><div class="a" style="left:1217px;top:1066px;width:9px;height:3px;border-radius:2px;background:#777;"></div><div class="a" style="left:1261px;top:1066px;width:9px;height:3px;border-radius:2px;background:#777;"></div><svg style="left:1614px;top:1043px" width="16" height="10"><path d="M2 8L8 2L14 8" fill="none" stroke="#222" stroke-width="1.4"/></svg><svg style="left:1644px;top:1041px" width="20" height="18"><path d="M3 8a6 6 0 0 1 11-3M15 10a6 6 0 0 1-11 3" fill="none" stroke="#222" stroke-width="1.3"/><circle cx="14" cy="14" r="3.5" fill="#f59a0a"/></svg><svg style="left:1676px;top:1041px" width="20" height="18"><ellipse cx="9" cy="8" rx="7" ry="5" fill="#bbb"/><circle cx="13" cy="12" r="5" fill="#1a73e8"/><rect x="12.3" y="10.5" width="1.4" height="4" fill="#fff"/><circle cx="13" cy="9" r="0.8" fill="#fff"/></svg><div class="t" style="left:1712px;top:1039px;font-size:12px;color:#222;">DEU</div><div class="t" style="left:1716px;top:1055px;font-size:12px;color:#222;">DE</div><svg style="left:1752px;top:1041px" width="18" height="16"><path d="M1 6a11 11 0 0 1 16 0M4 9a7 7 0 0 1 10 0M7 12a3 3 0 0 1 4 0" fill="none" stroke="#222" stroke-width="1.3"/><circle cx="9" cy="14" r="1.2" fill="#222"/></svg><svg style="left:1776px;top:1041px" width="20" height="16"><path d="M2 6h3l4-4v12l-4-4H2z" fill="none" stroke="#222" stroke-width="1.2"/><path d="M12 6l5 5M17 6l-5 5" stroke="#222" stroke-width="1.2"/></svg><svg style="left:1801px;top:1041px" width="22" height="16"><rect x="1" y="4" width="17" height="9" rx="2" fill="none" stroke="#222" stroke-width="1.2"/><rect x="3" y="6" width="5" height="5" fill="#1a8a2a"/><rect x="18.5" y="7" width="2" height="3" fill="#222"/><path d="M10 1l-2 6h3l-1 5" fill="none" stroke="#222" stroke-width="1"/></svg><div class="t" style="left:1837px;top:1036px;width:58px;text-align:right;font-size:12px;color:#222;">11:30</div><div class="t" style="left:1827px;top:1052px;width:68px;text-align:right;font-size:12px;color:#222;">22.03.2026</div></body></html>
